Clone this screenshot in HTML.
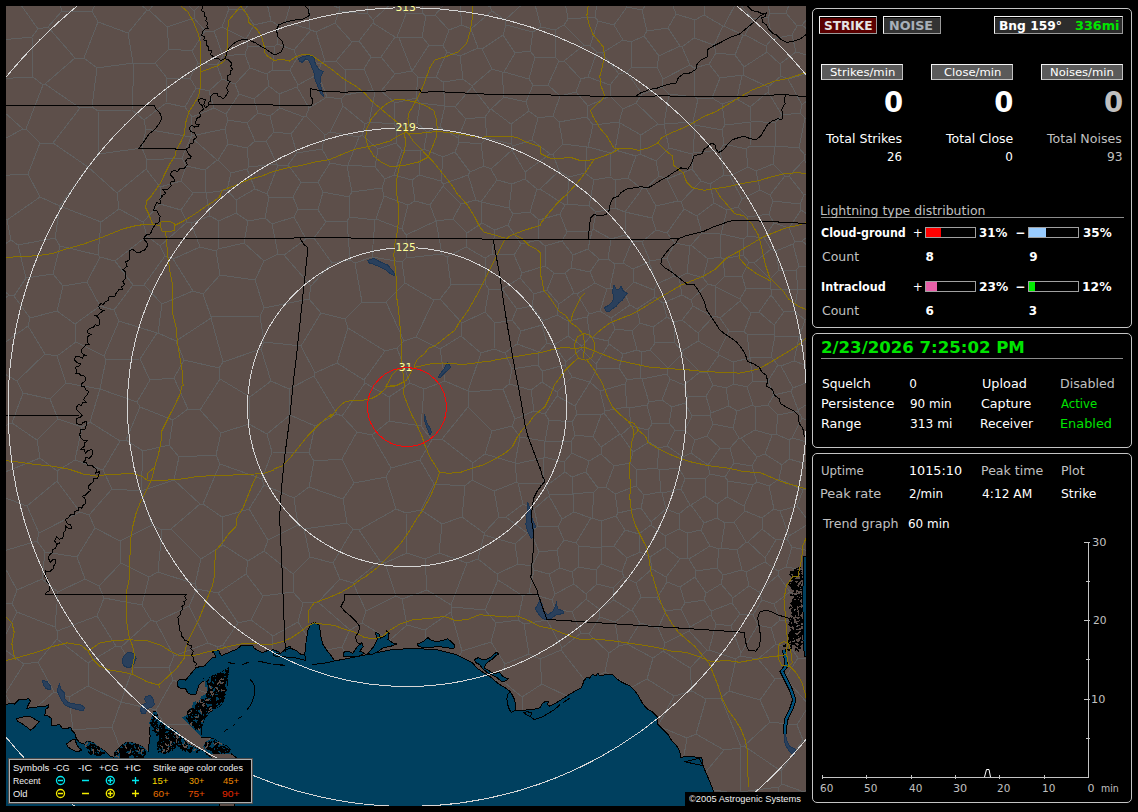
<!DOCTYPE html>
<html><head><meta charset="utf-8"><title>Lightning</title>
<style>
html,body{margin:0;padding:0;background:#000;}
body{width:1138px;height:812px;position:relative;overflow:hidden;font-family:"DejaVu Sans","Liberation Sans",sans-serif;font-size:12px;color:#fff;}
.abs{position:absolute;}
#map{position:absolute;left:6px;top:6px;width:800px;height:800px;background:#5d4f4a;overflow:hidden;}
#map svg{position:absolute;left:0;top:0;}
.panel{position:absolute;left:812px;width:318px;border:1px solid #c4c4c4;border-radius:5px;background:#000;}
.t{position:absolute;white-space:nowrap;display:block;transform-origin:0 0;}
.g{color:#c0c0c0;}
.gr{color:#00e400;}
.b{font-weight:bold;}
.c1{color:#e4e4e4;}
.lg{font-family:"Liberation Sans","DejaVu Sans",sans-serif;color:#f0f0f0;}
.c2{color:#a8b0b8;}
.btn{position:absolute;box-sizing:border-box;border:1px solid #c0c0c0;border-top-color:#f4f4f4;border-left-color:#f4f4f4;background:#5a5a5a;}
.btn.k{border-right-color:#9a9a9a;border-bottom-color:#9a9a9a;box-shadow:inset 0 1px 0 #000;}
.bar{position:absolute;box-sizing:border-box;border:1px solid #a0a0a0;width:51px;height:11px;background:#000;}
.bar i{position:absolute;left:0;top:0;height:9px;display:block;}
</style></head><body>
<div id="map">
<svg width="800" height="800" viewBox="6 6 800 800" shape-rendering="crispEdges" fill="none" stroke-width="1">
<path d="M57 837L76 805M76 805L67 791M35 832L26 800M26 800L37 788M37 788L67 791M320 786L310 830M320 786L331 781M331 781L350 791M350 791L353 820M320 786L298 779M294 831L276 791M276 791L298 779M156 622L174 656M156 622L189 606M174 656L208 643M189 606L208 643M7 220L-14 207M7 220L11 240M-20 261L11 240M100 809L108 836M100 809L120 792M140 799L120 792M140 799L146 838M76 805L100 809M67 791L76 763M120 792L116 763M76 763L116 763M156 750L122 753M156 750L166 765M160 791L166 765M160 791L140 799M116 763L122 753M12 604L17 612M12 604L-24 603M17 612L-0 646M12 604L17 590M17 590L42 579M58 592L42 579M58 592L55 627M17 612L55 627M17 590L-3 553M276 791L263 788M263 788L252 772M298 779L294 744M294 744L291 742M291 742L254 753M252 772L254 753M206 807L192 816M206 807L240 824M160 791L192 816M166 765L201 765M201 765L211 783M211 783L206 807M263 788L240 824M211 783L252 772M485 454L492 431M485 454L473 463M492 431L468 407M473 463L442 439M442 439L468 407M358 744L377 723M358 744L335 744M335 744L330 739M330 739L329 702M377 723L355 691M329 702L355 691M331 781L335 744M379 776L358 744M379 776L379 777M379 777L350 791M294 744L330 739M311 694L285 706M311 694L329 702M285 706L291 742M388 672L360 679M388 672L403 705M360 679L355 691M403 705L386 724M386 724L377 723M379 777L396 801M396 801L383 820M337 363L348 328M337 363L364 380M348 328L385 351M364 380L385 351M315 373L301 346M315 373L337 363M345 319L348 328M345 319L321 313M321 313L301 346M156 622L151 620M189 606L197 589M158 572L195 584M158 572L149 577M149 577L142 605M151 620L142 605M197 589L195 584M158 572L162 530M201 559L195 584M201 559L171 529M171 529L162 530M309 299L321 313M309 299L264 308M301 346L264 342M264 308L260 316M260 316L264 342M223 362L211 318M223 362L261 349M260 316L211 317M261 349L264 342M211 317L211 318M184 360L219 368M184 360L176 341M219 368L223 362M211 318L176 341M55 238L60 246M55 238L18 245M18 245L26 278M60 246L53 274M26 278L53 274M1 836L-12 801M26 800L-10 799M37 788L29 762M29 762L-12 757M-25 690L5 694M-11 744L18 715M18 715L5 694M-0 646L24 664M5 694L24 664M55 627L57 631M24 664L38 662M38 662L57 639M57 631L57 639M380 561L359 530M380 561L385 563M385 563L407 553M396 509L359 530M396 509L406 513M406 513L407 553M379 776L405 753M386 724L405 747M405 753L405 747M396 801L404 802M405 753L436 780M404 802L436 780M404 802L426 834M471 717L447 693M471 717L450 738M450 738L432 730M432 730L423 705M447 693L432 694M423 705L432 694M405 747L432 730M454 757L437 780M454 757L450 738M436 780L437 780M403 705L423 705M476 716L489 684M476 716L471 717M447 693L462 669M489 684L462 669M201 765L211 734M254 753L246 743M246 743L211 734M285 706L282 705M282 705L256 713M246 743L256 713M165 725L206 724M165 725L156 750M206 724L211 734M744 746L770 722M744 746L781 771M781 771L803 740M770 722L797 725M797 725L803 740M741 747L744 746M741 747L721 698M760 700L729 691M760 700L770 722M721 698L729 691M809 705L797 725M809 705L785 678M760 700L775 679M775 679L785 678M809 705L818 701M831 754L803 740M834 768L804 792M804 792L815 819M781 771L782 784M782 784L804 792M729 691L736 659M775 679L758 659M758 659L740 656M736 659L740 656M741 747L740 748M740 748L740 792M782 784L779 787M740 792L779 787M779 787L772 832M740 748L724 750M699 780L724 750M699 780L702 788M740 792L739 794M702 788L739 794M721 698L706 699M690 668L692 691M690 668L707 650M707 650L709 650M736 659L709 650M706 699L692 691M724 750L696 734M706 699L696 734M682 767L687 738M682 767L699 780M696 734L687 738M776 644L758 659M776 644L771 628M740 656L741 653M741 653L758 625M771 628L758 625M92 11L98 22M92 11L105 -14M98 22L128 33M114 -19L147 10M128 33L147 10M149 10L157 1M149 10L147 10M159 -31L157 1M-15 95L23 129M-11 147L23 129M-10 21L6 -3M-7 79L33 77M1 40L32 37M32 37L33 77M362 302L345 319M362 302L386 302M397 348L385 351M397 348L404 341M386 302L404 341M314 376L289 389M314 376L337 414M289 389L290 415M290 415L315 426M337 414L315 426M315 373L314 376M271 381L289 389M271 381L261 349M364 380L365 383M342 416L365 383M342 416L337 414M424 389L421 426M424 389L410 383M410 383L389 397M389 397L389 421M421 426L389 421M432 440L442 439M432 440L421 426M445 381L468 391M445 381L424 389M468 407L469 392M469 392L468 391M397 348L410 383M365 383L389 397M42 579L45 552M-3 553L37 541M45 552L37 541M80 512L39 533M80 512L57 481M39 533L27 506M57 481L27 506M-12 520L3 497M39 533L37 541M27 506L3 497M3 497L-3 478M264 308L255 280M255 280L220 275M211 317L203 294M220 275L203 294M309 453L272 452M309 453L315 426M290 415L267 434M267 434L272 452M157 333L119 321M157 333L140 359M119 321L104 356M140 359L106 360M104 356L106 360M9 295L14 296M9 295L-22 320M14 296L30 318M28 326L30 318M28 326L-7 351M-19 271L9 295M11 240L18 245M26 278L14 296M3 373L-27 397M3 373L-7 351M63 286L57 311M63 286L87 282M100 306L75 324M100 306L87 282M75 324L57 311M53 274L63 286M30 318L57 311M60 246L98 255M100 257L98 255M100 257L87 282M114 310L119 321M114 310L100 306M76 342L104 356M76 342L75 324M114 310L133 285M100 257L115 261M133 285L115 261M25 717L54 692M25 717L44 742M44 742L65 742M69 697L54 692M69 697L73 730M73 730L65 742M18 715L25 717M38 662L54 692M29 762L44 742M76 763L65 742M112 727L122 753M112 727L73 730M470 172L468 175M470 172L455 152M468 175L443 184M443 157L455 152M443 157L441 181M441 181L443 184M468 175L476 200M443 184L443 186M443 186L461 204M476 200L461 204M542 382L531 390M542 382L542 371M542 371L538 365M531 390L509 384M509 384L512 369M538 365L512 369M469 392L503 389M468 391L481 353M503 389L509 384M494 349L481 353M494 349L505 353M505 353L512 369M121 647L116 646M121 647L133 667M116 646L88 663M133 667L121 702M121 702L121 702M121 702L88 686M88 686L88 663M104 598L142 605M104 598L97 616M151 620L121 647M97 616L116 646M174 656L169 668M169 668L133 667M97 616L57 631M57 639L88 663M156 710L173 680M156 710L121 702M169 668L173 680M165 725L156 710M112 727L121 702M69 697L88 686M816 658L798 658M792 649L798 658M792 649L798 625M798 625L813 624M785 678L798 658M776 644L792 649M522 697L500 679M522 697L523 710M476 716L498 730M500 679L489 684M498 730L523 710M254 669L223 645M254 669L236 696M236 696L212 699M218 647L223 645M218 647L209 694M209 694L212 699M282 705L264 668M264 668L254 669M256 713L236 696M206 724L212 699M208 643L218 647M218 593L197 589M218 593L238 623M238 623L223 645M173 680L209 694M309 487L343 499M309 487L294 498M343 499L347 523M347 523L304 529M304 529L298 525M298 525L294 498M223 545L248 561M223 545L201 559M218 593L246 574M246 574L248 561M380 561L353 583M396 596L385 563M396 596L366 611M353 583L366 611M667 813L694 804M694 804L713 833M647 791L655 808M647 791L652 773M655 808L667 813M652 773L682 767M702 788L694 804M655 808L632 834M739 794L739 811M674 696L658 726M674 696L647 679M647 679L632 687M632 687L630 716M630 716L651 729M658 726L651 729M692 691L674 696M687 738L658 726M690 668L663 651M653 658L647 679M653 658L663 651M645 760L651 729M645 760L614 757M615 722L630 716M615 722L607 737M614 757L607 737M652 773L645 760M779 479L769 486M779 479L803 490M780 511L797 506M780 511L774 509M803 490L797 506M774 509L769 486M774 509L762 518M762 518L745 511M769 486L757 482M744 506L745 511M744 506L753 485M753 485L757 482M771 628L780 620M798 625L793 621M793 621L780 620M780 511L789 536M797 506L810 523M789 536L810 523M803 490L806 489M806 489L830 504M814 524L810 523M762 518L762 529M789 536L787 539M787 539L776 540M762 529L776 540M484 166L470 172M484 166L481 144M455 152L459 142M481 144L459 142M149 10L167 27M180 -4L157 1M180 -4L194 11M167 27L194 18M194 11L194 18M16 -2L38 29M62 11L48 27M62 11L51 -24M38 29L48 27M32 37L38 29M92 11L62 11M23 129L26 129M33 77L43 85M43 85L26 129M443 186L430 205M461 204L453 219M453 219L436 221M436 221L430 205M442 254L436 221M442 254L447 257M453 219L467 233M467 233L466 247M447 257L466 247M436 221L436 221M442 254L406 258M436 221L406 235M406 235L406 258M362 302L355 263M355 263L372 257M386 302L405 283M405 283L402 262M372 257L402 262M405 283L434 300M404 341L416 337M434 300L416 337M445 381L440 349M481 353L461 336M461 336L440 349M440 349L416 337M120 541L95 528M120 541L121 563M95 528L77 557M121 563L99 586M77 557L85 579M85 579L99 586M112 489L89 515M112 489L141 491M152 525L141 491M152 525L120 541M89 515L95 528M149 577L121 563M152 525L162 530M80 512L89 515M45 552L77 557M104 598L99 586M58 592L85 579M184 360L174 378M157 333L158 333M176 341L158 333M140 359L150 380M174 378L150 380M106 360L100 389M100 389L137 402M150 380L137 402M173 259L193 291M173 259L165 256M165 256L144 285M193 291L162 304M162 304L144 285M220 275L216 251M203 294L193 291M200 247L216 251M200 247L173 259M160 246L147 236M160 246L165 256M147 236L115 261M133 285L144 285M158 333L162 304M354 483L342 459M354 483L386 477M391 468L386 477M391 468L372 435M342 459L357 432M372 435L357 432M309 487L314 461M314 461L342 459M343 499L354 483M396 509L386 477M359 530L353 529M347 523L353 529M420 460L434 484M420 460L391 468M406 513L421 510M434 484L421 510M420 460L432 440M389 421L372 435M342 416L357 432M309 453L314 461M141 491L174 480M141 491L141 491M171 529L200 504M174 480L200 504M126 440L140 407M126 440L120 441M100 389L100 389M100 389L90 422M140 407L137 402M90 422L120 441M112 489L103 470M141 491L143 451M143 451L126 440M103 470L120 441M40 458L57 471M40 458L37 440M37 440L58 419M57 471L75 460M75 460L82 427M58 419L82 427M57 481L57 471M-0 474L40 458M-4 429L12 423M12 423L37 440M103 470L75 460M90 422L82 427M17 381L23 393M17 381L45 354M23 393L50 399M50 399L66 383M66 383L57 356M45 354L57 356M3 373L17 381M12 423L23 393M28 326L45 354M58 419L50 399M100 389L66 383M76 342L57 356M419 175L441 181M419 175L412 180M430 205L415 201M412 180L415 201M402 229L406 235M402 229L408 205M408 205L415 201M476 200L481 202M467 233L482 223M482 223L481 202M485 258L466 247M485 258L492 254M492 254L495 230M482 223L495 230M484 166L491 169M497 180L491 169M497 180L481 202M481 202L481 202M512 184L497 180M512 184L509 208M481 202L509 208M531 390L534 411M503 389L515 419M534 411L515 419M515 463L520 437M515 463L515 464M515 464L543 458M544 457L543 458M544 457L544 441M520 437L544 441M485 454L515 463M492 431L512 426M520 437L512 426M512 426L515 419M538 365L539 352M505 353L517 344M539 352L517 344M538 526L534 509M538 526L531 532M534 509L523 504M531 532L527 533M527 533L506 517M523 504L506 517M515 464L517 482M543 458L544 484M544 484L518 483M517 482L518 483M518 564L515 544M518 564L497 574M515 544L484 535M497 574L478 559M478 559L484 535M534 411L545 414M545 414L549 420M544 441L545 441M545 441L549 420M542 382L557 392M545 414L557 396M557 392L557 396M753 381L750 358M753 381L747 387M750 358L750 358M750 358L733 362M733 362L734 384M747 387L734 384M734 522L745 511M734 522L725 523M744 506L727 497M725 523L717 518M717 518L717 504M727 497L717 504M753 485L728 481M727 497L728 481M437 780L450 798M450 798L447 823M450 798L486 795M486 795L493 809M493 809L487 835M540 659L561 650M540 659L542 684M561 650L586 682M542 684L573 699M586 682L580 694M573 699L580 694M609 653L589 634M609 653L605 672M605 672L586 682M562 648L561 650M562 648L581 633M581 633L589 634M605 672L632 687M615 722L580 694M500 679L505 664M462 669L458 658M458 658L462 651M462 651L491 642M491 642L505 664M522 697L542 684M540 659L529 654M505 664L529 654M432 694L419 665M458 658L428 656M419 665L428 656M388 672L394 665M419 665L394 665M360 679L342 647M342 647L350 630M362 623L350 630M362 623L390 640M394 665L390 640M396 596L402 599M366 611L362 623M390 640L407 625M402 599L407 625M428 656L425 630M407 625L425 630M462 651L451 612M425 630L451 612M485 610L496 623M485 610L452 607M491 642L496 623M452 607L451 612M647 791L602 794M614 757L599 779M599 779L602 794M616 835L598 803M602 794L598 803M481 763L491 781M481 763L498 734M491 781L513 774M513 774L519 752M498 734L519 752M454 757L481 763M486 795L491 781M498 730L498 734M565 717L579 740M565 717L545 725M545 725L538 748M579 740L572 761M538 748L556 768M572 761L556 768M607 737L579 740M573 699L565 717M523 710L545 725M519 752L538 748M599 779L572 761M562 648L547 620M529 654L524 624M547 620L524 624M496 623L518 620M524 624L518 620M498 580L523 596M498 580L485 610M518 620L523 596M557 550L560 568M557 550L539 552M539 552L532 566M560 568L549 574M549 574L534 570M532 566L534 570M558 527L538 526M558 527L564 540M531 532L539 552M564 540L557 550M527 533L515 544M518 564L532 566M497 574L498 580M529 593L523 596M529 593L534 570M238 623L251 620M246 574L263 596M251 620L263 596M310 557L333 563M310 557L293 574M293 574L293 592M333 563L340 579M340 579L318 602M293 592L303 603M318 602L303 603M353 529L333 563M304 529L310 557M298 525L268 540M268 540L264 551M264 551L293 574M264 551L248 561M263 596L293 592M353 583L340 579M350 630L318 602M758 625L753 615M780 620L774 604M774 604L762 600M753 615L762 600M716 624L731 626M716 624L711 615M711 615L711 611M711 611L732 603M731 626L740 614M740 614L732 603M741 653L731 626M709 650L716 624M753 615L740 614M653 658L627 644M609 653L619 646M627 644L619 646M706 593L704 600M706 593L695 577M704 600L685 603M685 603L680 587M695 577L680 587M806 489L811 479M811 479L824 473M787 539L792 547M792 547L818 553M793 621L797 595M774 604L790 592M797 595L790 592M623 40L602 53M623 40L631 42M632 67L631 42M632 67L627 72M627 72L619 74M619 74L602 53M530 51L515 53M530 51L533 32M533 32L506 25M506 25L503 35M515 53L503 35M481 144L487 138M466 119L458 138M466 119L485 117M459 142L458 138M487 138L485 117M194 11L211 -6M167 27L169 49M194 18L205 31M169 49L192 51M205 31L192 51M255 189L247 169M255 189L236 200M247 169L231 173M236 200L227 190M227 190L231 173M309 299L311 286M355 263L350 260M350 260L332 263M311 286L332 263M350 260L347 221M347 221L326 222M332 263L314 238M326 222L314 238M219 221L218 249M219 221L236 213M236 213L248 221M248 221L244 243M218 249L244 243M269 197L265 218M269 197L267 194M267 194L255 189M265 218L248 221M236 200L236 213M255 280L264 261M216 251L218 249M264 261L244 243M160 246L187 222M200 247L191 223M187 222L191 223M219 221L210 216M191 223L210 216M227 190L206 193M210 216L206 193M143 451L169 445M140 407L173 420M169 445L173 420M174 480L179 457M169 445L179 457M174 378L188 409M173 420L188 409M222 517L249 509M222 517L203 504M203 504L220 464M220 464L262 479M249 509L264 485M262 479L264 485M223 545L222 517M268 540L249 509M200 504L203 504M179 457L216 455M216 455L220 464M294 498L264 485M272 452L262 479M525 172L512 150M525 172L550 154M550 154L532 140M532 140L513 146M513 146L512 150M525 179L512 184M525 179L525 172M491 169L512 150M538 118L529 111M538 118L532 140M529 111L511 124M511 144L511 124M511 144L513 146M511 144L487 138M553 116L559 122M553 116L538 118M553 154L563 144M553 154L550 154M559 122L563 144M547 343L539 352M547 343L542 325M517 344L521 331M542 325L521 331M494 349L495 323M495 323L512 320M521 331L512 320M520 278L534 294M520 278L502 289M502 289L517 309M517 309L532 306M534 294L532 306M542 325L543 321M512 320L517 309M532 306L543 321M568 321L587 317M568 321L557 315M557 315L559 304M559 304L574 293M589 314L587 317M589 314L577 294M577 294L574 293M547 343L554 345M554 345L568 336M568 336L568 321M543 321L557 315M534 294L547 290M547 290L559 304M607 289L600 311M607 289L595 283M600 311L589 314M595 283L577 294M545 266L545 246M545 266L554 273M554 273L565 273M573 255L562 241M573 255L571 268M565 273L571 268M545 246L562 241M522 273L545 266M522 273L520 278M547 290L554 273M574 293L565 273M590 272L571 268M590 272L599 259M599 259L588 249M588 249L573 255M595 283L590 272M485 312L489 289M485 312L462 323M462 323L440 299M485 284L451 285M485 284L489 289M451 285L440 299M495 323L485 312M502 289L489 289M461 336L462 323M434 300L440 299M485 258L485 284M447 257L451 285M522 273L514 255M492 254L514 255M402 262L406 258M513 214L508 225M513 214L530 212M508 225L521 244M539 220L530 212M539 220L538 240M538 240L521 244M495 230L508 225M509 208L513 214M537 189L530 212M537 189L525 179M514 255L521 244M545 246L538 240M768 92L782 115M768 92L768 87M802 105L788 79M802 105L800 113M800 113L782 115M788 79L781 76M768 87L781 76M533 32L541 27M528 -1L505 20M505 20L506 25M541 27L534 1M571 -6L565 2M565 2L541 -3M558 527L562 519M534 509L549 496M549 496L562 519M544 484L546 486M546 486L549 494M523 504L518 483M549 496L549 494M549 494L573 494M562 519L574 512M573 494L574 512M544 457L564 462M546 486L565 472M564 462L565 472M484 533L499 517M484 533L462 517M499 517L494 491M462 517L465 486M494 491L472 480M472 480L465 486M506 517L499 517M484 535L484 533M517 482L494 491M434 484L465 486M421 510L442 524M442 524L462 517M473 463L472 480M779 479L782 465M757 482L752 466M757 457L752 466M757 457L765 454M765 454L782 465M811 479L803 463M803 463L789 459M782 465L789 459M750 358L771 357M750 358L747 334M771 357L775 336M747 334L774 334M775 336L774 334M624 292L634 282M624 292L630 305M634 282L654 290M630 305L637 309M637 309L655 297M654 290L655 297M607 289L610 288M600 311L611 318M611 318L630 305M610 288L624 292M804 195L800 204M804 195L789 176M800 204L773 201M785 176L770 195M785 176L789 176M770 195L773 201M821 181L804 160M804 160L789 176M816 190L804 195M801 210L800 204M801 210L823 225M801 210L789 228M789 228L795 242M795 242L802 241M823 225L802 241M771 295L784 312M771 295L759 312M759 312L774 325M784 312L774 325M794 311L784 312M794 311L798 289M771 290L798 289M771 290L771 295M751 313L744 332M751 313L740 301M740 301L720 318M744 332L729 331M729 331L720 318M747 334L744 332M774 334L774 325M759 312L751 313M718 353L729 331M718 353L719 355M733 362L719 355M682 351L674 342M682 351L698 341M698 341L698 333M674 342L674 322M674 322L682 320M682 320L698 333M674 342L655 343M674 322L667 317M667 317L653 327M655 343L653 327M663 303L667 317M663 303L655 297M637 309L640 323M640 323L653 327M568 336L582 346M587 317L590 337M590 337L582 346M789 440L789 459M789 440L776 434M765 454L772 435M772 435L776 434M682 351L682 354M655 343L650 350M682 354L668 368M650 350L668 368M728 481L725 477M752 466L734 463M725 477L734 463M717 518L704 523M704 523L691 505M717 504L705 496M691 505L705 496M451 605L427 590M451 605L467 563M427 590L425 559M467 563L439 553M439 553L425 559M402 599L427 590M452 607L451 605M478 559L467 563M407 553L425 559M442 524L439 553M493 809L527 808M513 774L529 786M529 786L527 808M556 768L553 774M529 786L553 774M574 584L555 594M574 584L586 594M586 594L586 599M586 599L572 612M572 612L555 609M555 609L552 600M552 600L555 594M572 572L560 568M572 572L574 584M549 574L555 594M578 567L572 572M578 567L596 570M597 584L596 570M597 584L586 594M581 633L572 612M547 620L555 609M529 593L552 600M272 660L273 636M272 660L307 665M273 636L298 622M298 622L317 652M307 665L317 652M264 668L272 660M251 620L273 636M311 694L307 665M303 603L298 622M342 647L317 652M762 600L759 592M790 592L778 575M759 592L778 575M681 609L666 611M681 609L690 627M666 611L658 628M689 631L690 627M689 631L665 643M665 643L658 628M685 603L681 609M657 598L666 611M657 598L667 582M680 587L667 582M704 600L711 611M711 615L690 627M641 597L632 610M641 597L657 598M632 610L640 623M640 623L658 628M707 650L689 631M663 651L665 643M640 623L627 644M614 600L599 609M614 600L630 610M630 610L615 622M615 622L600 617M600 617L599 609M613 588L597 584M613 588L614 600M586 599L599 609M632 610L630 610M619 646L615 622M589 634L600 617M652 569L650 557M652 569L636 583M650 557L640 552M640 552L627 558M627 558L622 572M636 583L624 577M624 577L622 572M641 597L636 583M666 577L667 582M666 577L652 569M639 534L640 552M639 534L625 530M625 530L614 546M614 546L627 558M613 588L624 577M596 570L601 564M601 564L622 572M688 558L680 559M688 558L687 533M680 559L665 547M679 529L687 533M679 529L665 536M665 536L665 547M689 559L696 571M689 559L688 558M695 577L696 571M666 577L680 559M710 546L701 530M710 546L689 559M701 530L687 533M650 557L665 547M651 525L639 534M651 525L665 536M797 595L809 571M797 595L816 601M817 567L809 571M797 595L797 595M786 567L809 571M786 567L778 571M778 571L778 575M792 547L786 567M704 523L701 530M691 505L690 505M679 529L679 514M679 514L690 505M601 548L602 547M601 548L579 546M602 547L601 521M576 543L579 546M576 543L591 518M601 521L592 518M591 518L592 518M614 546L602 547M601 564L601 548M578 567L579 546M625 530L616 516M616 516L601 521M564 540L576 543M574 512L591 518M541 27L555 30M555 30L564 25M565 2L568 19M568 19L564 25M598 -3L595 17M568 19L595 17M616 -7L627 7M627 7L614 25M614 25L598 21M595 17L598 21M597 52L588 77M597 52L590 46M584 45L590 46M584 45L564 61M564 61L581 79M588 77L581 79M610 85L619 74M610 85L588 77M602 53L597 52M614 25L623 40M598 21L590 46M564 25L584 45M556 58L559 61M556 58L535 57M559 61L548 85M535 57L529 79M548 85L533 85M529 79L533 85M555 30L556 58M564 61L559 61M530 51L535 57M576 92L560 96M576 92L581 79M560 96L548 85M504 72L515 53M504 72L529 79M526 102L529 111M526 102L533 85M553 116L560 96M500 -13L490 7M476 -0L490 7M505 20L492 11M492 11L490 7M482 49L503 35M482 49L478 48M492 11L471 29M478 48L471 29M460 6L476 -0M460 6L462 25M462 25L471 29M504 72L502 72M482 49L492 69M502 72L492 69M526 102L504 97M502 72L504 97M511 124L491 109M504 97L491 109M485 117L490 110M490 110L491 109M460 6L449 -1M347 221L350 217M326 222L318 210M323 192L318 210M323 192L349 197M349 197L350 217M372 257L375 220M350 217L375 220M402 229L376 219M408 205L384 196M384 196L376 219M376 219L375 220M229 9L224 -2M229 9L244 10M254 -1L244 10M323 192L318 182M318 210L298 209M293 197L298 209M293 197L301 182M301 182L318 182M229 9L222 27M254 25L244 10M254 25L246 39M246 39L222 27M205 31L214 31M222 27L214 31M209 91L196 88M209 91L214 108M196 88L185 107M185 107L192 117M192 117L214 108M147 236L143 222M181 210L187 222M181 210L160 204M160 204L143 222M98 255L101 222M143 222L119 209M101 222L119 209M55 238L60 206M101 222L60 206M99 154L142 148M99 154L88 167M147 160L142 148M147 160L146 169M146 169L117 193M88 167L117 193M160 187L160 204M160 187L146 169M119 209L117 193M144 120L166 103M144 120L132 110M132 110L134 63M166 103L167 78M167 78L155 63M155 63L134 63M185 107L166 103M191 137L146 129M191 137L191 136M146 129L144 120M192 117L191 136M99 154L98 111M98 111L132 110M146 129L142 148M196 88L190 78M190 78L167 78M190 78L198 63M169 49L155 63M192 51L198 63M128 33L133 63M133 63L134 63M80 108L45 84M80 108L92 107M92 107L97 68M45 84L75 58M97 68L84 58M84 58L75 58M133 63L97 68M98 111L92 107M48 27L75 58M43 85L45 84M98 22L84 58M272 224L278 254M272 224L294 217M294 217L306 239M306 239L284 255M278 254L284 255M265 218L272 224M264 261L278 254M269 197L293 197M298 209L294 217M314 238L306 239M311 286L284 255M181 210L193 193M206 193L205 192M193 193L205 192M160 187L181 181M193 193L181 181M220 379L200 410M220 379L250 397M200 410L221 433M221 433L249 424M250 397L249 424M219 368L220 379M188 409L200 410M271 381L250 397M216 455L221 433M267 434L249 424M593 125L587 117M593 125L619 122M610 96L623 109M610 96L588 106M588 106L587 117M623 109L619 122M559 122L587 117M563 144L587 147M587 147L588 147M588 147L593 125M610 85L610 96M576 92L588 106M553 154L559 171M587 147L585 173M585 173L569 177M559 171L569 177M537 189L540 189M559 171L540 189M682 295L679 277M682 295L663 303M679 277L674 276M654 290L657 284M674 276L657 284M679 277L687 273M687 273L690 246M667 258L674 276M667 258L675 243M675 243L690 246M708 259L691 245M708 259L720 257M720 257L720 234M720 234L702 233M702 233L691 245M703 278L687 273M703 278L708 259M690 246L691 245M596 212L589 206M596 212L593 229M589 206L567 204M593 229L592 231M592 231L567 232M567 232L560 214M560 214L565 205M565 205L567 204M585 173L594 180M594 180L589 206M569 177L567 204M588 249L592 231M562 241L567 232M539 220L560 214M540 189L565 205M610 288L615 264M599 259L608 259M615 264L608 259M593 229L611 239M608 259L611 239M627 7L642 10M644 36L631 42M644 36L647 31M647 31L642 10M649 -16L646 5M646 5L642 10M704 15L706 -3M704 15L695 20M695 20L676 14M677 -5L673 6M673 6L676 14M646 5L673 6M668 28L676 14M668 28L647 31M644 36L659 56M668 28L680 46M680 46L659 56M632 67L657 67M659 56L657 67M813 121L805 118M805 118L799 148M818 151L805 155M805 155L799 148M819 90L802 105M800 113L805 118M776 146L775 123M776 146L799 148M775 123L782 115M804 160L805 155M773 164L775 146M773 164L785 176M775 146L776 146M573 494L594 492M573 494L572 477M572 477L586 472M586 472L598 488M594 492L598 488M573 494L573 494M592 518L594 492M565 472L572 477M615 494L618 513M615 494L606 487M618 513L616 516M606 487L598 488M803 463L813 453M792 438L811 443M792 438L802 418M802 418L821 426M811 443L822 431M789 440L792 438M813 453L811 443M798 411L778 415M798 411L802 418M778 415L776 434M817 398L798 410M798 411L798 410M753 381L768 381M771 357L778 365M768 381L778 365M798 410L791 391M768 405L778 415M768 405L774 395M774 395L791 391M816 266L799 267M799 267L796 270M796 270L798 289M798 289L815 291M813 317L805 320M805 320L799 337M815 345L799 337M799 337L799 337M794 311L805 320M798 289L798 289M775 336L799 337M771 290L770 288M770 288L746 289M740 301L740 299M740 299L746 289M743 255L723 259M743 255L749 262M749 262L742 276M742 276L725 276M723 259L725 276M754 263L770 279M754 263L771 249M776 251L771 249M776 251L779 270M779 270L770 279M770 288L770 279M746 289L742 276M749 262L754 263M799 267L793 244M796 270L779 270M793 244L776 251M789 228L774 223M793 244L795 242M771 249L764 238M774 223L764 238M773 201L769 214M774 223L769 214M802 241L822 258M715 316L713 317M715 316L716 287M713 317L693 306M708 284L691 300M708 284L715 286M691 300L693 306M715 286L716 287M718 353L698 341M720 318L715 316M698 333L713 317M740 299L716 287M682 320L693 306M682 295L691 300M703 278L708 284M720 257L723 259M725 276L715 286M623 354L609 344M623 354L637 350M637 350L632 331M632 331L615 329M615 329L608 341M608 341L609 344M640 323L632 331M650 350L642 352M642 352L637 350M611 318L615 329M590 337L608 341M581 349L596 364M581 349L566 362M572 377L590 382M572 377L565 365M565 365L566 362M590 382L590 382M590 382L597 368M596 364L597 368M582 346L581 349M609 344L596 364M554 345L566 362M575 406L557 396M575 406L590 382M557 392L572 377M542 371L565 365M619 368L597 368M619 368L623 354M648 430L649 442M648 430L631 426M649 442L633 452M631 426L621 435M621 435L633 452M564 462L572 453M586 472L589 461M589 461L572 453M606 487L614 466M614 466L601 454M589 461L601 454M614 466L630 463M621 435L620 434M620 434L601 447M630 463L633 452M601 454L601 447M545 441L571 442M571 442L572 453M741 438L739 438M741 438L755 430M739 438L733 428M733 428L737 411M755 430L755 407M737 411L753 405M753 405L755 407M757 457L741 438M734 463L730 448M730 448L739 438M772 435L755 430M707 436L720 448M707 436L713 424M713 424L733 428M720 448L730 448M729 406L737 411M729 406L711 413M710 415L711 413M710 415L713 424M768 405L755 407M747 387L753 405M734 384L726 388M726 388L729 406M768 381L774 395M688 397L706 396M688 397L684 385M684 385L700 372M706 396L713 385M713 385L707 372M707 372L700 372M692 416L685 403M692 416L710 415M711 413L706 396M685 403L688 397M726 388L713 385M719 355L707 372M682 354L700 372M668 368L667 374M684 385L670 379M670 379L667 374M692 416L685 430M707 436L695 440M695 440L685 430M615 494L636 486M630 463L637 470M636 486L637 470M649 442L659 448M659 448L657 468M637 470L657 468M667 446L675 430M667 446L683 457M695 440L691 453M685 430L675 430M691 453L683 457M720 448L708 465M691 453L708 465M725 477L710 474M708 465L710 474M705 496L706 478M710 474L706 478M579 809L564 804M579 809L571 847M564 804L536 818M598 803L579 809M553 774L564 804M527 808L536 818M762 529L748 542M776 540L765 558M765 558L748 542M778 571L765 562M765 558L765 562M734 522L746 542M746 542L748 542M462 25L449 30M449 -1L435 15M449 30L435 15M422 -6L422 13M422 13L426 16M435 15L426 16M466 119L455 107M490 110L472 87M455 107L472 87M492 69L472 86M472 87L472 86M458 138L440 127M455 107L445 106M440 127L445 106M395 -8L394 1M422 13L406 14M394 1L406 14M349 197L352 192M384 196L382 188M352 192L382 188M345 -11L339 8M339 8L312 -3M267 194L278 165M301 182L288 165M278 165L288 165M191 136L225 129M214 108L226 114M225 129L228 120M226 114L228 120M88 167L60 206M88 167L53 143M28 174L40 197M28 174L40 143M40 197L60 206M40 143L53 143M88 167L88 167M60 206L60 206M80 108L53 143M7 220L40 197M-7 176L28 174M26 129L40 143M191 137L182 158M191 137L217 160M217 160L205 170M205 170L186 166M182 158L186 166M191 137L191 137M147 160L182 158M228 144L225 129M228 144L218 160M218 160L217 160M218 160L231 173M205 192L205 170M181 181L186 166M634 282L633 269M615 264L623 263M633 269L623 263M657 284L649 262M633 269L649 262M667 258L650 261M649 262L650 261M788 79L809 73M809 73L821 81M627 72L642 94M657 67L663 79M663 79L662 87M662 87L642 94M623 109L636 103M642 94L636 103M695 20L694 38M680 46L682 47M694 38L682 47M663 79L690 65M682 47L690 65M806 383L793 388M806 383L805 365M793 388L781 366M805 365L794 361M794 361L781 366M815 387L806 383M791 391L793 388M818 360L805 365M778 365L781 366M799 337L794 361M769 214L748 217M764 238L747 236M748 217L747 236M720 234L721 234M743 255L744 239M721 234L744 239M744 239L747 236M601 415L593 437M601 415L577 414M593 437L575 435M575 435L572 422M577 414L572 422M604 413L620 434M604 413L601 415M601 447L593 437M575 406L577 414M600 391L590 382M600 391L605 411M605 411L604 413M571 442L575 435M549 420L572 422M685 403L672 407M670 379L662 400M662 400L672 407M675 430L669 423M672 407L669 423M648 430L652 424M659 448L667 446M652 424L669 423M640 378L642 379M640 378L627 380M642 379L649 402M627 380L625 384M625 384L627 407M629 408L627 407M629 408L647 405M647 405L649 402M642 352L640 378M667 374L642 379M619 368L627 380M662 400L649 402M600 391L625 384M605 411L627 407M631 426L629 408M652 424L647 405M618 513L641 508M636 486L644 495M644 495L641 508M651 525L651 522M651 522L641 508M679 514L666 509M651 522L666 509M659 470L661 492M659 470L679 468M679 468L685 479M662 493L661 492M662 493L681 489M681 489L685 479M657 468L659 470M644 495L661 492M683 457L679 468M706 478L685 479M666 509L662 493M690 505L681 489M759 592L749 586M765 562L746 572M749 586L746 572M732 603L733 598M749 586L733 598M706 593L721 584M733 598L721 584M773 164L756 171M770 195L760 190M756 171L760 190M693 153L720 150M693 153L695 125M722 130L695 125M722 130L724 144M724 144L720 150M775 146L750 146M750 146L746 149M756 171L748 167M746 149L748 167M588 147L611 153M594 180L610 177M611 153L610 177M619 122L620 123M636 103L658 124M658 124L641 135M620 123L641 135M611 153L615 150M620 123L615 150M426 16L422 37M406 14L397 37M397 37L399 38M399 38L422 37M478 48L460 56M472 86L463 79M460 56L463 79M445 106L445 106M445 106L443 82M463 79L443 82M443 157L424 149M440 127L427 132M427 132L424 149M419 175L421 151M421 151L424 149M366 -13L368 14M339 8L339 11M339 11L368 14M311 30L309 29M311 30L316 32M316 32L335 23M309 -0L309 29M339 11L335 23M394 1L373 20M368 14L373 20M280 -7L291 3M280 -7L267 3M291 3L285 22M267 3L271 21M271 21L278 25M278 25L285 22M309 -0L291 3M254 -1L267 3M309 29L285 22M254 25L271 21M311 30L294 50M277 44L294 50M277 44L278 25M247 169L249 167M278 165L277 164M249 167L277 164M228 144L247 148M249 167L247 148M228 120L247 123M247 148L255 141M247 123L255 141M277 164L266 141M255 141L266 141M318 182L330 163M352 192L347 166M330 163L347 166M288 165L297 153M330 163L322 149M297 153L322 149M316 32L325 61M294 50L297 58M297 58L321 64M321 64L325 61M246 39L248 46M277 44L275 46M248 46L275 46M611 239L625 235M623 263L632 241M625 235L632 241M650 261L642 242M632 241L642 242M675 243L667 233M667 233L656 230M642 242L656 230M809 73L807 55M821 46L807 55M781 76L780 64M780 64L796 52M796 52L807 55M695 97L669 94M695 97L698 99M698 99L693 122M693 122L664 124M669 94L664 124M664 124L664 124M662 87L669 94M694 68L690 65M694 68L695 97M709 64L694 68M709 64L720 78M720 78L712 98M712 98L698 99M693 153L692 154M695 125L693 122M692 154L669 148M669 148L664 124M658 124L664 124M768 87L743 75M743 75L744 67M780 64L767 52M744 67L767 52M793 -6L786 13M786 13L797 26M814 11L802 25M797 26L802 25M765 -9L770 14M770 14L786 13M822 42L802 25M792 35L796 52M792 35L797 26M725 125L722 104M725 125L751 122M722 104L737 99M737 99L750 107M750 107L751 121M751 121L751 122M722 130L725 125M712 98L722 104M750 146L751 122M724 144L746 149M742 75L720 78M742 75L737 99M768 92L750 107M743 75L742 75M775 123L751 121M742 570L723 575M742 570L737 550M737 550L721 548M717 568L719 549M717 568L723 575M721 548L719 549M746 572L742 570M721 584L723 575M746 542L737 550M725 523L721 548M710 546L719 549M696 571L717 568M748 217L738 207M721 234L727 210M727 210L738 207M720 150L724 175M748 167L730 176M724 175L730 176M760 190L742 199M730 176L742 199M738 207L742 199M460 56L447 52M443 82L436 77M436 77L447 52M449 30L443 46M422 37L429 45M429 45L443 46M443 46L447 52M412 180L394 175M421 151L402 150M402 150L394 175M382 188L385 179M348 165L347 166M348 165L375 167M375 167L385 179M394 175L385 179M397 37L395 37M373 20L373 23M395 37L373 23M274 132L270 116M274 132L291 134M304 117L291 134M304 117L280 108M280 108L270 116M247 123L258 113M258 113L270 116M266 141L274 132M297 153L291 134M322 149L325 135M325 135L306 116M306 116L304 117M297 58L290 70M275 46L272 70M272 70L290 70M306 116L309 108M280 108L279 94M309 108L297 87M279 94L297 87M321 64L318 74M318 74L298 85M290 70L298 85M318 74L327 97M309 108L327 97M297 87L298 85M226 114L239 94M258 113L254 99M239 94L254 99M279 94L269 86M254 99L269 86M272 70L267 74M269 86L267 74M727 210L714 203M724 175L710 184M714 203L710 184M702 233L697 216M714 203L697 216M667 233L684 209M697 216L684 209M641 135L640 154M669 148L656 161M656 161L640 154M615 150L636 156M640 154L636 156M735 55L743 35M735 55L716 53M714 45L716 53M714 45L723 26M743 35L724 26M723 26L724 26M709 64L716 53M744 67L735 55M694 38L714 45M704 15L723 26M737 1L724 26M772 39L766 46M772 39L768 17M766 46L745 35M745 35L753 19M768 17L753 19M792 35L772 39M767 52L766 46M770 14L768 17M743 35L745 35M737 1L753 19M348 165L359 137M325 135L330 132M330 132L359 137M402 150L396 143M375 167L378 149M396 143L378 149M359 137L362 135M378 149L362 135M327 97L341 99M330 132L343 106M341 99L343 106M362 135L365 124M343 106L365 124M399 38L412 71M395 37L381 57M381 57L395 74M395 74L412 71M436 77L418 77M429 45L412 71M418 77L412 71M412 71L412 71M417 123L396 127M417 123L420 103M395 103L416 98M395 103L394 124M396 127L394 124M420 103L416 98M427 132L417 123M396 143L396 127M445 106L420 103M381 91L395 74M381 91L395 103M418 77L416 98M369 122L375 92M369 122L394 124M375 92L381 91M369 122L365 124M222 79L217 65M222 79L235 84M235 84L250 68M217 65L223 56M223 56L245 54M245 54L250 68M209 91L222 79M198 63L217 65M239 94L235 84M267 74L250 68M214 31L223 56M248 46L245 54M710 184L701 181M684 209L681 202M681 202L701 181M692 154L692 169M692 169L701 181M596 212L615 208M610 177L615 180M615 208L615 180M636 156L628 178M615 180L628 178M373 23L359 41M381 57L371 57M371 57L359 41M335 23L352 42M352 42L359 41M325 61L336 61M352 42L336 61M681 202L678 201M692 169L667 179M678 201L667 179M656 161L659 176M659 176L667 179M373 90L364 69M373 90L345 95M364 69L345 70M345 95L345 70M375 92L373 90M371 57L364 69M341 99L345 95M336 61L345 70M652 218L625 212M652 218L656 206M656 206L646 188M625 212L625 212M625 212L642 189M642 189L646 188M625 235L625 212M656 230L652 218M678 201L656 206M659 176L646 188M615 208L625 212M628 178L642 189" stroke="#606060"/>
<g fill="#2a405c" stroke="#1c3654"><path d="M298.8 58.8L303.5 56.4L309.4 55.3L314.1 57.6L315.2 63.5L318.8 69.4L323.4 71.7L321.1 75.2L319.9 83.4L322.3 90.5L323.4 96.3L321.1 94.0L317.6 85.8L314.8 78.7L314.1 72.9L311.7 67.0L309.4 61.1L305.8 58.8L302.3 62.3L299.3 61.1Z"/><path d="M368.0 260.5L373.9 258.2L379.8 261.7L388.0 265.2L392.7 271.1L396.2 276.2L391.5 274.6L385.6 269.9L378.6 266.4L372.7 264.0L369.2 262.9Z"/><path d="M447.4 363.0L449.5 365.1L450.9 367.3L448.1 370.1L445.3 372.2L442.5 375.0L440.4 377.8L438.3 377.1L440.4 373.6L442.5 370.8L444.6 368.0L446.0 365.1Z"/><path d="M424.2 413.7L425.6 417.2L426.3 421.4L428.4 425.6L430.5 428.4L431.2 432.6L429.8 434.7L428.4 431.2L427.0 427.7L425.3 423.5L424.5 418.6Z"/><path d="M527.6 502.1L529.9 508.0L531.1 515.0L533.4 522.1L535.8 526.8L532.3 529.1L533.9 536.2L531.1 538.5L527.6 531.5L525.9 524.4L526.4 517.4L527.6 510.4Z"/><path d="M613.9 285.2L616.3 289.9L619.8 288.7L620.9 286.3L623.3 291.0L627.3 293.4L624.5 296.9L622.1 300.4L618.6 302.8L616.3 306.3L612.7 308.6L609.2 312.1L605.7 311.0L604.5 307.5L609.2 305.1L612.7 301.6L613.9 296.9L612.3 292.2Z"/><path d="M540.0 600.6L542.3 604.2L543.5 611.2L548.2 614.7L552.9 611.2L555.3 606.5L556.4 603.0L557.6 608.8L563.5 611.2L563.5 613.5L556.4 614.7L551.7 618.2L547.0 620.1L542.3 618.2L540.0 615.9L535.3 608.8Z"/><path d="M123.3 656.9L128.0 652.3L133.9 653.4L136.2 658.1L133.9 664.0L129.2 668.0L124.5 666.3L122.1 662.8Z"/><path d="M42.4 680.4L47.1 681.6L50.6 686.3L50.6 689.8L45.9 688.6L43.5 685.1Z"/><path d="M59.5 684.4L61.1 689.8L64.7 693.3L64.2 698.0L68.2 702.7L74.0 703.9L81.1 705.0L84.6 707.4L83.4 710.9L77.6 709.7L70.5 707.4L64.7 705.0L61.1 699.2L58.1 693.3L57.6 688.6Z"/><path d="M145.6 696.8L150.3 695.2L153.3 699.2L154.3 705.0L151.5 707.4L146.8 708.6L145.6 713.3L142.1 714.0L140.2 709.7L142.1 705.0L146.3 702.7L144.4 699.2Z"/><path d="M785.0 732.3L786.6 740.0L789.7 746.2L795.9 749.3L793.4 755.5L789.0 750.9L785.3 744.7L784.1 736.9Z"/></g>
<g fill="#00405f" stroke="#000"><path d="M3.2 704.8L6.0 704.8L10.2 703.4L14.4 704.1L19.4 699.1L24.3 699.8L28.5 698.4L30.6 701.2L28.5 704.1L27.1 708.3L32.7 707.6L38.3 706.9L45.4 706.2L48.2 704.8L48.9 706.9L46.1 709.0L44.7 715.3L48.2 716.0L51.0 718.1L51.7 725.1L54.5 725.9L59.4 724.4L62.2 728.0L66.5 728.7L70.7 727.3L72.1 730.8L74.9 733.6L76.3 738.5L79.1 742.0L81.9 743.4L84.7 744.1L86.8 741.3L90.4 742.0L94.6 743.4L97.4 746.2L101.6 749.1L105.8 751.9L110.0 756.1L114.3 757.5L115.0 751.9L118.5 749.1L122.7 744.8L126.9 742.0L132.5 742.7L138.2 744.8L143.8 747.6L148.0 751.9L148.7 746.2L150.1 736.4L149.4 728.0L152.2 722.3L155.0 716.7L153.6 711.1L153.2 711.0L156.7 712.4L158.1 718.7L163.7 724.4L169.4 727.2L176.4 731.4L182.0 737.0L184.8 741.2L189.1 744.7L196.1 748.3L203.1 751.1L206.6 754.0L215.0 760.0L222.0 830.0L-10.0 830.0Z"/><path d="M232.0 830.0L240.0 760.0L231.2 754.0L230.5 749.7L227.0 746.2L221.4 744.0L217.2 741.2L213.0 738.4L205.9 737.0L201.7 737.0L201.0 730.0L202.4 724.4L204.5 718.7L208.7 713.1L214.4 708.9L220.0 706.1L223.5 700.5L225.6 693.4L227.0 686.4L227.7 678.0L228.4 668.1L220.0 673.0L214.4 675.1L208.7 678.0L203.8 678.0L204.5 680.8L201.7 682.2L198.9 685.0L197.5 689.2L196.1 694.1L191.9 694.8L187.6 692.7L185.5 688.5L180.6 688.5L177.8 686.4L177.1 682.2L178.5 680.1L182.0 679.4L185.5 680.1L189.1 675.9L193.3 670.9L196.1 667.4L200.3 666.7L204.5 666.0L208.7 661.1L211.5 658.3L215.8 656.9L214.4 653.4L212.2 652.0L214.4 650.1L218.6 650.1L220.0 653.4L221.4 655.5L228.4 652.7L236.9 649.1L241.1 645.6L252.3 645.3L254.4 648.4L257.9 650.5L262.2 652.7L267.8 650.5L273.4 649.8L279.0 652.0L281.1 654.1L284.7 651.2L286.1 647.7L290.0 646.3L290.6 648.3L296.5 650.6L301.2 654.6L304.7 654.6L305.8 644.0L307.7 631.1L310.5 624.1L314.8 622.2L319.5 625.3L320.6 635.8L322.7 644.0L326.5 649.9L332.1 656.9L334.5 660.9L343.4 659.3L366.9 654.6L390.3 649.9L413.8 648.3L437.2 649.9L456.0 654.6L472.4 662.8L477.0 668.1L484.1 673.0L491.1 677.3L498.1 683.6L505.1 687.8L510.1 691.3L512.2 694.8L514.3 699.1L515.7 704.7L515.0 710.3L517.8 711.0L523.4 710.3L529.1 709.6L536.1 708.9L540.3 707.5L541.7 704.7L543.1 702.6L546.6 701.2L548.7 701.9L547.3 704.7L549.4 706.1L554.4 704.0L560.0 700.5L565.6 696.9L571.2 693.4L576.9 689.9L581.1 687.8L582.5 685.0L583.9 680.8L586.7 677.3L589.5 678.0L592.3 674.4L595.8 675.9L597.9 673.0L599.3 675.9L603.6 675.1L609.2 674.4L613.4 675.1L617.6 679.4L621.8 682.2L626.1 684.3L630.0 685.7L633.9 689.8L638.5 695.7L642.1 702.7L646.8 708.6L652.6 712.1L657.3 716.8L657.3 723.8L662.0 728.5L667.9 734.4L671.4 740.2L676.1 744.9L679.6 750.8L680.8 757.8L684.3 756.7L692.5 756.7L701.9 757.8L703.1 765.6L684.6 761.8L699.0 758.2L704.4 769.0L709.8 781.6L713.4 790.6L718.8 812.2L720.0 830.0Z"/><path d="M803.6 556.9L803.6 578.6L802.1 597.2L803.6 622.1L803.0 640.7L804.6 656.2L811.4 659.3L811.4 556.9Z"/><path d="M343.4 656.9L343.4 652.3L348.1 651.1L352.8 653.4L357.5 646.4L361.7 642.9L363.3 646.4L359.8 651.1L364.5 653.4L357.5 656.9Z"/><path d="M368.0 653.4L373.9 646.4L377.4 639.4L375.1 632.3L378.6 633.5L380.9 638.2L385.6 635.8L386.8 631.1L389.1 633.5L388.0 639.4L392.7 642.9L397.4 644.0L390.3 646.4L383.3 647.6L378.6 651.1L371.5 654.6Z"/><path d="M417.3 644.0L423.2 641.7L427.9 637.5L431.4 640.5L437.2 641.7L441.9 640.5L447.8 638.9L451.3 641.7L454.8 645.2L453.7 648.7L446.6 647.6L437.2 646.4L430.2 647.6L423.2 647.6L418.5 646.4Z"/><path d="M474.2 659.7L478.4 657.6L482.7 659.7L486.9 659.0L491.1 656.9L493.9 654.1L496.7 652.0L498.8 654.1L495.3 656.2L492.5 659.0L488.3 661.8L485.5 664.6L484.1 668.1L488.3 670.2L493.9 673.7L499.5 672.3L503.0 676.6L508.0 678.7L506.6 680.8L501.6 681.5L497.4 678.0L492.5 675.1L486.9 672.3L482.7 668.8L479.8 664.6L475.6 662.5Z"/><path d="M273.0 653.9L280.0 653.9L284.7 649.9L290.6 648.3L296.5 650.6L301.2 654.6L304.7 654.6L305.8 660.5L296.5 658.1L284.7 656.9L273.0 655.8Z"/></g>
<path d="M783.5 650.0L785.0 653.1L786.6 665.5L781.9 671.7L786.6 681.0L791.2 690.4L794.3 699.7L791.2 709.0L786.6 718.3L785.0 727.6L785.0 733.8" stroke="#000" stroke-width="4.2"/>
<path d="M783.5 650.0L785.0 653.1L786.6 665.5L781.9 671.7L786.6 681.0L791.2 690.4L794.3 699.7L791.2 709.0L786.6 718.3L785.0 727.6L785.0 733.8" stroke="#00507a" stroke-width="2.2"/>
<g fill="#5d4f4a" stroke="#000"><path d="M16.5 718.8L21.5 717.4L27.1 716.0L32.0 717.4L36.2 720.2L39.0 721.6L36.2 725.1L32.7 728.7L30.6 730.1L27.1 727.3L22.2 723.7L18.0 721.6Z"/><path d="M66.5 744.1L72.1 739.9L74.9 739.2L76.3 743.4L79.1 748.3L81.9 749.8L77.7 751.9L72.1 749.8L67.9 746.9Z"/></g>
<path d="M203.1 677.3L208.7 678.0L214.4 675.1L220.0 673.0L228.4 668.1L227.7 678.0L227.0 686.4L225.6 693.4L223.5 700.5L220.0 706.1L214.4 708.9L208.7 713.1L204.5 718.7L202.4 724.4L201.0 730.0L201.7 737.0L196.1 731.4L190.5 725.8L182.0 717.3L186.2 715.9L187.6 710.3L191.9 707.5L193.3 701.9L198.9 700.5L201.7 696.2L206.6 693.4L207.3 687.8L204.5 686.4L204.5 680.8Z" fill="#00405f" stroke="none"/>
<path d="M149.0 723.0L151.1 718.7L153.2 711.7L156.7 712.4L158.1 718.7L163.7 724.4L169.4 727.2L176.4 731.4L182.0 737.0L184.8 741.2L189.1 744.7L196.1 748.3L203.1 751.1L206.6 754.0L186.2 754.0L176.4 746.9L172.2 754.0L158.1 754.0L156.7 744.0L159.5 738.4L152.5 731.4Z" fill="#00405f" stroke="none"/>
<path d="M84.7 744.1L86.8 741.3L90.4 742.0L94.6 743.4L97.4 746.2L101.6 749.1L105.8 751.9L107.2 756.1L103.0 757.5L96.0 756.1L90.4 754.7L86.1 750.5Z" fill="#00405f" stroke="none"/>
<path d="M114.3 757.5L115.0 751.9L118.5 749.1L122.7 744.8L126.9 742.0L132.5 742.7L138.2 744.8L143.8 747.6L148.0 751.9L148.0 758.2L118.5 758.2Z" fill="#00405f" stroke="none"/>
<path d="M213.0 738.4L217.2 741.2L221.4 744.0L227.0 746.2L230.5 749.7L231.2 754.0L208.7 754.0L203.1 746.9L205.9 741.2Z" fill="#00405f" stroke="none"/>
<path d="M216.0 698.0L214.3 696.6L212.5 695.3L210.8 696.7L208.9 695.6M226.0 691.2L223.8 691.0L222.4 692.8L220.3 692.4L218.1 692.7L216.1 693.7L214.2 692.6M200.7 699.9L202.3 701.4L203.1 703.5L205.3 703.8L206.0 701.7L206.1 699.5L207.6 698.0L209.5 696.8L209.8 694.6L211.7 693.6M224.4 684.5L224.0 686.6L223.2 688.7L221.0 688.5L219.0 687.6L217.8 685.8L218.3 683.6L218.8 681.5L218.0 679.4L217.7 677.2M221.7 693.1L220.1 691.6L220.7 689.5L222.2 687.8M193.7 726.5L195.9 726.9L198.1 727.3L200.2 727.8M192.1 723.5L190.8 721.7L188.8 722.6M215.4 682.5L214.2 684.3L212.1 685.2L209.9 685.2L207.9 684.4M204.1 705.7L201.9 705.7L199.7 705.8L198.0 704.5L198.9 702.6L201.1 702.8M193.7 715.5L193.7 713.3L193.6 711.1L192.5 709.2M208.9 685.4L208.4 687.6L210.1 688.9L209.1 690.8L209.5 693.0L207.4 693.8M221.1 674.7L222.0 676.6L224.0 677.7L226.1 677.3M198.4 714.5L196.8 713.0L194.8 713.8L192.6 713.5L191.7 711.5L192.8 709.6M209.9 707.8L212.1 707.6L214.2 708.1L215.8 706.5L217.7 705.4M188.5 720.4L188.9 718.2L188.5 716.1L188.4 713.9L189.6 712.0L191.7 711.3M212.0 701.5L209.8 701.4L207.9 702.6L205.7 702.3L204.3 700.6L202.4 699.6L200.9 701.3L202.2 703.1L203.5 704.9L204.5 706.8L206.7 706.9M204.2 703.3L202.4 704.5L200.2 704.8L198.0 705.0M193.9 709.8L192.2 708.4L190.4 709.7L188.4 710.5L187.4 712.5M210.0 689.8L211.6 691.4L211.7 693.6L213.9 693.9L214.4 696.0M189.6 719.3L191.7 719.2L193.9 718.7L195.7 717.4M194.4 727.1L196.6 727.1L198.6 726.1L199.0 723.9L200.1 722.0L200.4 719.9L202.2 718.5L204.0 717.3L205.5 715.6L204.2 713.9M218.7 692.6L220.8 693.3L222.9 693.8L224.8 694.9M206.8 693.2L206.6 695.4L207.4 697.4L206.5 699.5L205.1 701.1L205.0 703.3M197.6 715.7L195.4 715.4L193.3 716.0L191.2 715.3L189.8 717.0L189.6 719.2L188.7 721.2L189.8 723.1L191.8 724.1L193.9 723.6L195.9 722.6M185.8 717.6L187.4 719.2L189.5 719.5L191.7 719.4L192.6 721.4M211.2 689.6L212.7 691.2L211.9 693.3L212.8 695.3L215.0 695.2L217.1 695.8L218.8 694.5L220.1 692.7L218.8 690.9L216.8 690.0L214.6 689.6M219.5 698.0L219.8 700.2L217.8 701.1L218.4 703.2L219.3 705.2M202.9 717.6L201.0 718.7L199.1 719.8L196.9 719.7L195.8 717.8L193.6 717.8L192.5 719.7M220.2 687.9L221.1 689.9L220.4 691.9L218.2 691.7L216.8 690.0L215.8 688.1L213.8 687.3L213.9 685.1L216.0 684.3L218.0 685.0M221.7 694.6L219.9 695.9L217.9 696.7L215.8 695.9L214.5 697.7L212.4 698.2L212.4 700.4L212.9 702.6L214.0 704.5L216.1 703.8L216.2 701.6M213.1 686.5L212.4 684.5L211.5 682.4L211.3 680.2L211.4 678.1L212.5 676.1M227.5 670.5L226.4 672.4L225.6 674.4L223.4 674.2L221.3 673.9M200.2 704.1L198.0 704.5L196.5 706.1L197.7 708.0L199.9 707.7L201.5 709.2L202.1 711.3M213.4 682.0L213.6 679.8L214.2 677.7L215.0 675.7L217.2 675.6L219.0 674.4L221.1 673.9L222.3 675.8L224.4 676.6M202.5 703.1L203.7 704.9L205.3 706.4L207.1 707.7L209.2 708.5L210.7 710.1M215.2 687.7L215.1 685.5L215.4 683.3L216.2 681.3L217.5 679.5L217.8 677.3L219.6 676.0L221.8 675.5L224.0 675.3L226.1 675.0L227.7 673.5M200.9 718.7L201.8 716.7L203.9 717.1L206.0 716.5L207.4 714.7M201.8 708.1L203.9 707.5L204.3 705.4L202.7 703.9L200.5 704.2L198.3 704.2M217.3 701.4L215.1 701.2L213.9 703.0L212.8 704.9L212.0 707.0L210.0 708.0L208.9 709.9L206.9 710.8M215.8 678.3L217.9 679.1L219.0 681.0L221.1 680.3L220.9 678.1L221.1 675.9L221.6 673.7M218.0 674.9L220.2 674.8L221.5 676.5L223.6 677.3L225.3 678.7L227.0 677.3M207.1 705.9L205.2 704.8L205.2 702.6L207.1 701.5L208.8 700.2L210.9 699.5L212.7 700.8L213.5 702.8L214.9 704.5L216.1 706.4M224.1 688.0L221.9 688.5L220.5 686.7L221.9 685.0L223.6 683.6L224.5 681.6L222.8 680.1M213.5 709.1L211.7 707.7L209.6 707.2L207.5 708.0L206.8 710.0L204.8 710.9L203.3 709.3L202.6 707.2L204.3 705.7M197.3 718.4L199.5 718.4L201.1 720.0L200.8 722.2L199.6 724.0L197.6 724.9L195.5 725.6L194.9 727.7M221.5 682.9L220.7 684.9L222.4 686.3L222.3 688.5L224.0 689.8L226.0 690.7M201.7 708.7L199.5 708.9L197.6 709.9L197.1 712.1L194.9 712.2L192.7 712.0L192.4 709.8L190.7 708.5M190.9 709.8L192.9 709.0L194.8 710.2L196.4 708.7L198.6 708.6L200.8 709.2L203.0 708.9L203.5 706.8L203.0 704.6L200.9 703.8L200.9 701.6M202.3 715.5L200.1 715.4L199.5 717.5L199.5 719.7L197.9 721.2L198.0 723.4L199.0 725.4M198.9 703.2L200.8 704.4L200.3 706.6L200.2 708.8L198.1 709.2L196.9 707.3L198.2 705.5M205.1 713.0L203.0 713.7L202.1 715.6L201.6 717.8L203.1 719.4M198.8 723.5L200.7 724.7L200.4 726.9L198.5 727.9L196.6 726.7L195.4 724.9L193.2 724.8L191.0 725.2M223.2 691.9L223.9 694.0L222.1 695.3L222.2 697.5M207.1 703.7L208.1 701.7L209.2 699.8L211.3 699.2L213.5 699.7L214.4 701.7M218.0 676.9L216.0 678.0L213.9 678.5L212.4 676.9M206.6 684.5L208.6 683.5L210.7 683.0L211.6 680.9L213.1 679.4L212.5 677.3M208.1 699.7L207.1 701.7L208.0 703.7L210.1 703.1L212.3 703.6L214.1 704.9L215.7 703.4L215.7 701.2L214.6 699.3L215.3 697.2L217.1 696.0M209.6 683.7L207.5 683.4L207.2 681.2L208.7 679.6M200.6 718.8L199.5 720.8L200.1 722.9L201.2 724.8L200.6 726.9M205.3 715.3L205.2 717.5L203.8 719.2M190.4 718.8L192.4 719.7L193.2 721.8L195.3 722.6L196.8 724.1L198.6 725.5L199.5 727.5M217.8 677.4L216.4 679.1L217.7 680.8L219.8 681.6L221.9 681.0L224.1 681.4L226.3 681.9M194.7 726.5L196.5 727.9L195.5 729.8M214.4 706.8L212.7 705.4L212.4 703.3L211.6 701.2L212.1 699.0L211.1 697.1L212.3 695.2L210.8 693.6M224.5 675.6L226.7 675.9L227.9 674.1L226.5 672.3L225.9 670.2M208.8 697.5L207.9 695.4L206.0 694.4M198.9 707.8L196.8 708.5L195.5 706.8L196.4 704.8L197.9 703.2L196.9 701.2M216.1 684.9L217.3 683.1L219.3 683.9L221.5 683.7L223.7 683.2L223.9 681.0L224.9 679.1M190.8 712.7L189.3 714.3L187.1 714.2M210.8 707.2L209.3 708.8L207.4 707.6L205.4 706.7L203.3 706.1L203.5 703.9L205.2 702.6M222.4 689.6L220.2 689.3L218.2 690.0L216.9 691.8L214.8 691.5L213.1 692.9L211.1 692.0L210.1 690.1L208.1 689.2M209.9 712.1L210.0 709.9L209.7 707.8L211.7 706.7M207.9 711.3L206.6 713.1L204.5 712.5L202.4 711.9L201.1 710.1L200.7 707.9L202.5 706.6L203.3 704.6L203.6 702.4M224.7 685.4L223.1 683.9L221.0 684.8L219.8 686.6L220.5 688.7L222.7 688.9L224.1 687.2L226.2 687.9M195.9 709.9L197.9 709.1L200.1 709.3L202.3 709.3L204.4 708.5L204.6 706.4L206.8 706.1M221.6 697.8L221.6 700.0L219.9 701.3L220.0 703.5M198.8 716.7L200.7 717.8L202.3 716.2L204.1 717.3M220.0 677.0L220.0 679.2L218.7 681.0L216.6 681.8L214.4 681.5L213.7 679.5L215.1 677.8L217.0 676.8M205.5 698.2L207.2 699.5L206.8 701.7L205.0 702.9L205.4 705.1L205.1 707.2L205.7 709.4L204.8 711.4L206.3 713.1M207.2 692.2L209.4 692.4L211.6 692.4L212.5 690.4L212.9 688.3M216.9 683.0L216.4 685.2L215.5 687.2L217.3 688.5L219.4 688.0L221.5 688.6L223.7 688.1L225.7 689.0L226.0 691.2M191.3 714.7L190.3 712.7L188.2 713.1M195.8 718.0L194.1 719.4L191.9 719.4L190.9 721.4L189.2 722.8M219.6 688.8L221.8 689.1L223.9 689.5L225.1 687.6M221.1 679.3L222.2 677.3L223.8 675.9L225.7 674.8L227.2 676.4L226.4 678.5L226.1 680.7L223.9 680.9L222.5 679.2L220.6 678.0M198.3 712.7L200.0 714.1L200.2 716.3L200.1 718.5L200.7 720.6L200.0 722.7L197.8 723.0M224.5 696.3L222.5 695.4L223.1 693.3L225.2 692.6M219.1 691.6L218.3 693.6L220.0 694.9L219.5 697.0L219.8 699.2L220.5 701.3L222.7 701.6L223.3 699.4L222.7 697.3L220.6 696.9L218.4 697.3M213.9 682.5L215.9 683.5L218.0 683.1L219.4 681.4L218.0 679.6L217.7 677.5L219.2 675.8M197.1 730.3L198.1 728.3L200.2 727.7L201.9 726.3M224.0 687.0L224.4 684.8L225.4 682.8L225.7 680.6L227.1 678.9M211.8 694.7L211.5 692.5L210.6 690.5L209.2 688.8M175.9 739.8L174.1 741.1L172.4 742.4L170.2 742.2L168.1 742.9L166.2 744.0L165.5 746.1M158.3 730.5L156.1 730.2L154.0 730.9M170.8 729.6L171.7 731.6L172.8 733.5L173.7 735.6L175.3 737.0L177.1 735.7L179.3 735.6M151.0 719.4L153.2 719.7L153.3 721.9L151.6 723.3L149.6 722.4M159.3 745.2L161.4 744.6L162.6 746.4L164.7 746.0L165.6 744.0L165.4 741.8L164.4 739.8L162.2 740.1L160.0 740.1L159.7 737.9L159.1 735.8M185.5 748.0L183.6 746.7L181.5 747.0L179.9 748.6M188.1 749.5L185.9 749.4L183.7 749.2L182.0 750.6M162.9 730.1L160.8 729.2L158.7 729.9L156.5 730.0L154.6 731.1L152.8 730.0M187.0 750.1L188.9 751.3L190.5 752.7M164.9 743.6L163.1 742.3L161.5 740.8L162.6 738.9L162.6 736.7M162.5 742.3L162.8 744.5L161.1 745.9L159.1 744.9L158.3 742.8L160.0 741.4L160.8 739.3M166.6 749.7L164.6 750.7L162.4 751.0L160.3 751.5L158.1 751.9M151.2 724.9L153.0 726.2L154.4 727.9L154.9 730.0L154.6 732.2M170.3 745.2L172.1 746.5L173.8 745.1L176.0 744.7L176.6 742.6L178.0 740.9L178.7 738.9L180.9 738.3M183.3 747.8L184.7 749.6L186.1 751.3M181.7 748.9L182.9 747.1L181.5 745.3L179.3 745.3L177.1 745.4M159.7 732.8L158.6 734.7L156.4 735.1M163.4 740.0L164.1 737.9L163.4 735.8L165.1 734.4L167.2 733.8L168.3 735.7L167.2 737.6L166.6 739.7L165.3 741.5M166.4 752.2L166.1 750.0L164.1 749.0L164.3 746.8L165.6 745.1L164.2 743.4L162.1 743.9L160.0 744.8L158.3 743.4L158.7 741.2M163.4 730.6L163.5 728.4L161.6 727.4L161.6 725.2M171.8 744.7L171.1 746.8L169.2 747.9L169.7 750.1L168.8 752.1M153.7 719.2L155.6 718.1L155.8 715.9L153.8 715.0M157.7 746.0L158.9 747.8L157.8 749.7M166.8 730.4L169.0 730.4L169.8 732.5L169.5 734.6L170.0 736.8L172.2 736.8L173.1 734.8L173.0 732.6L171.9 730.7L169.7 731.0L169.2 733.1M161.8 745.5L160.5 747.2L161.3 749.3L162.0 751.4L163.8 752.6M169.5 737.8L171.7 737.9L173.8 738.6L176.0 738.5L178.0 737.5L178.2 735.3M172.9 736.0L171.3 737.6L172.1 739.6L174.2 740.4L175.4 738.5L176.5 736.6L175.4 734.8L174.4 732.8L172.2 732.5L170.1 732.1L168.0 732.9M168.3 753.2L168.7 751.0L167.3 749.3L166.6 747.2L167.4 745.2L169.6 744.8M172.4 740.1L170.5 738.8L168.4 739.4L167.4 741.4M168.0 732.9L169.9 734.0L172.1 734.6L174.1 735.4L176.2 736.0M187.5 747.8L186.7 745.7L186.1 743.6M159.5 740.0L159.1 742.2L161.1 743.2L160.9 745.4L159.5 747.1L157.7 748.3L158.5 750.3M162.9 724.1L163.5 726.3L161.6 727.5L159.6 728.2L157.7 727.1L157.5 724.9L155.5 724.0L153.9 725.5L151.8 724.9L151.9 722.7L153.2 720.9M168.7 730.3L166.6 730.0L165.1 731.6L163.1 732.6L161.4 734.0L159.2 734.0L157.2 733.0M180.5 746.2L182.6 747.0L184.7 747.6L186.7 748.5M164.9 729.5L162.8 730.1L161.2 731.6L162.2 733.5L163.2 735.5L164.9 736.8L166.9 735.8M159.2 739.1L160.8 737.6L163.0 737.5L163.5 735.4L165.7 735.2L167.7 736.3L167.4 738.4L167.7 740.6L166.6 742.6M165.4 734.4L164.1 732.6L163.1 730.6L164.8 729.2L163.8 727.3L165.0 725.5M162.0 744.9L162.3 742.7L164.5 742.4L166.1 740.8L167.9 739.7L169.5 738.1L171.2 736.8L173.2 737.7L174.8 739.2L176.9 739.9M163.1 753.4L165.3 753.5L166.2 751.5L165.9 749.3L165.3 747.2L167.2 746.0L168.5 744.3L170.5 745.2L172.2 746.6L172.9 748.7L171.8 750.6M170.6 734.7L172.0 736.4L173.3 738.2L174.5 740.0L176.2 741.4L175.3 743.4L174.9 745.6L175.3 747.7M161.8 744.8L163.2 743.1L165.1 742.1L166.6 743.7L168.8 743.9L170.9 744.7L171.2 746.9M196.8 753.2L197.4 751.1L199.3 750.0M179.6 743.4L180.6 741.4L179.5 739.5L181.1 738.0M161.7 732.7L160.0 731.5L160.2 729.3L159.4 727.2L160.2 725.2L161.3 723.3M158.6 742.6L159.4 740.5L160.1 738.4L159.4 736.4L159.2 734.2L161.3 733.4L163.4 732.8L164.3 730.8L162.8 729.3M168.3 752.3L169.9 750.9L168.9 749.0L170.6 747.5M160.6 752.9L162.7 752.5L164.7 753.4M161.8 736.8L163.8 737.7L165.8 738.5L166.7 740.6L165.4 742.4L163.6 743.6L163.4 745.8L165.2 747.0M156.2 717.8L154.0 717.6L152.3 716.2M160.7 747.0L162.9 747.4L164.1 745.6L165.7 744.1L167.1 742.3L169.1 743.1L169.1 745.3L167.0 746.0L166.3 748.1L166.6 750.3L167.3 752.4M164.9 737.0L165.6 734.9L163.8 733.6L163.0 731.5L160.8 731.3M172.4 739.8L172.1 742.0L169.9 742.2L168.4 740.5L166.4 739.6M163.2 737.4L164.8 739.0L165.2 741.1L164.2 743.1L165.1 745.1L167.1 746.0L167.5 748.1L166.2 749.9L164.8 751.7M171.9 742.5L173.7 743.7L174.1 745.9L176.3 746.3M157.3 721.9L156.2 723.8L156.7 725.9L155.4 727.7L156.0 729.8L156.2 732.0L158.2 732.8L160.4 732.6M187.4 749.9L189.6 749.8L191.1 748.1M155.9 728.2L156.1 730.4L158.3 730.6L160.5 730.7L161.5 732.7L160.0 734.3L161.0 736.3L163.1 736.0M162.8 748.6L164.5 747.2L164.8 745.0L164.5 742.8L165.5 740.8L167.6 741.2L168.7 743.1L170.9 743.2M172.4 748.6L172.6 746.4L173.6 744.5L175.8 744.8L177.8 743.8L179.9 743.3L181.9 744.3L184.0 744.9L186.1 745.6L186.1 747.8M168.3 752.1L168.6 749.9L170.6 749.0L172.6 748.1L174.7 748.9M164.5 745.4L165.4 743.4L167.1 742.0L169.3 741.7L171.3 740.8L171.0 738.6L172.7 737.2M188.6 750.0L190.6 749.1L191.2 747.0M160.4 742.4L158.4 743.5L157.0 745.2M177.3 739.7L179.1 741.0L181.0 742.2L182.0 744.2L180.6 745.9L178.5 746.4L177.0 744.7L174.8 744.8L173.9 746.8L175.6 748.2M183.6 742.5L185.6 743.3L187.3 744.7L186.4 746.7M152.9 727.4L153.7 725.3L154.5 723.3L155.5 721.3L157.6 720.7M189.3 752.5L191.0 751.1L191.5 749.0L193.3 747.6M180.5 738.7L180.9 736.5L179.1 735.2M88.1 751.3L89.7 752.8L90.7 754.7M96.6 749.3L94.4 749.4L92.8 751.0L93.6 753.0L95.2 754.5M90.1 746.1L89.0 748.0L86.8 748.6M91.8 753.3L92.6 751.2L94.8 751.6L96.9 752.0L98.7 750.6L99.1 748.5L97.9 746.7M90.7 748.5L89.0 747.2L86.8 747.0L85.2 745.5M95.2 754.4L96.6 752.7L96.4 750.5L97.5 748.6L97.2 746.4M104.9 752.9L102.7 752.8L100.9 754.1L99.5 755.8M90.0 743.9L92.1 744.7L92.6 746.9L94.3 748.3L94.5 750.5M93.8 753.3L95.6 754.5L97.6 755.6M100.1 754.1L100.1 751.9L98.8 750.1L97.9 748.2M98.2 748.9L96.0 749.2L93.8 749.2L93.0 751.3L91.2 752.5L91.5 754.7M101.6 751.8L100.6 753.7L98.6 754.8L96.7 753.7L94.6 753.2L92.8 751.9M94.2 754.2L93.4 752.1L95.1 750.8L95.5 748.6L95.8 746.4L94.4 744.7L92.2 745.2L90.1 744.5M92.4 749.2L92.2 747.0L93.5 745.3M89.2 753.1L90.7 751.5L90.4 749.4L88.9 747.8L90.0 745.9L91.9 744.8L93.7 746.1M138.5 753.9L136.7 755.2L134.5 755.1L132.6 754.2L130.5 753.4M125.7 752.9L124.2 754.6L122.0 754.4L121.3 756.5M131.9 745.0L131.4 747.1L130.0 748.8L127.9 749.1L125.7 748.7L124.4 750.5L124.9 752.7L126.8 753.8L127.8 755.8L128.8 757.8M142.1 753.5L144.0 752.5L146.2 752.6M126.0 755.6L124.0 754.7L122.7 752.9L120.5 753.2L119.3 751.3M123.1 756.4L124.9 757.7L127.1 757.8L127.6 755.6M122.3 745.9L124.4 746.7L126.0 745.2L128.1 744.6L128.0 742.4M136.1 745.8L138.3 745.9L139.1 748.0L141.1 748.7L143.3 748.7L144.8 750.3M135.0 756.1L136.5 754.6L137.2 752.5L138.6 750.7L137.5 748.9L135.4 749.5L133.8 747.9L132.9 745.9L130.8 745.5L128.6 745.5L126.7 746.7M138.7 754.0L139.2 756.2L141.4 756.3L142.7 758.0M141.2 754.9L141.0 757.1L139.0 757.9L136.8 757.6L134.7 757.0L134.1 754.9L135.9 753.6L134.9 751.6L134.0 749.7L131.8 750.2L130.1 751.6M122.4 749.5L120.4 748.5L119.1 750.3M140.7 750.9L142.7 750.2L143.3 748.1M141.1 754.3L138.9 754.4L136.8 755.1L135.4 753.4L134.4 751.4L133.2 749.6L132.5 747.5L130.6 746.4L128.4 746.3L126.4 747.1L124.2 746.9M127.8 753.5L125.7 754.2L123.7 753.2L121.8 752.1L122.4 749.9L123.5 748.1L123.6 745.9M126.9 745.2L127.3 747.4L125.7 749.0L123.7 748.2L121.9 749.4L119.9 748.5M138.4 746.5L136.2 746.9L135.5 744.8L133.3 744.3M125.6 754.1L123.7 755.2L121.5 755.6L121.3 757.8M139.6 748.7L140.7 750.6L142.1 752.3L144.2 752.7L145.6 751.0M144.4 752.7L145.2 754.7L143.3 755.8L142.9 758.0M123.8 747.4L124.4 749.5L123.1 751.3L123.2 753.5L122.3 755.5L123.1 757.5M129.0 747.5L129.2 749.7L130.8 751.2L131.0 753.4L128.9 754.1L126.7 754.0L125.0 752.6L122.8 752.8M125.7 747.5L124.0 746.1L121.8 746.3M137.7 755.9L139.9 756.2L141.6 757.7M135.2 751.7L133.3 752.8L131.8 754.4L129.8 755.4L127.7 755.9L125.6 756.6L123.4 756.4M130.7 745.0L128.6 744.4L127.6 746.4L128.8 748.3L128.1 750.4L126.0 751.0L124.5 752.6M121.0 757.6L120.6 755.4L121.3 753.3L122.1 751.3L120.2 750.0M125.6 750.4L124.1 752.1L124.5 754.2L122.7 755.5L120.9 756.7M121.3 758.2L121.1 756.0L120.7 753.8L120.0 751.7L117.8 751.7L115.9 753.0L114.8 754.9M118.5 752.7L117.5 754.7L115.5 755.5M137.9 748.4L136.8 746.6L136.2 744.4M797.6 583.6L795.5 584.0L795.5 586.2L797.2 587.6L796.8 589.7L798.5 591.1M795.7 592.8L794.8 590.8L793.3 589.1L791.2 588.4M795.0 600.0L793.6 601.7L794.1 603.8L794.1 606.0L796.1 606.9L797.8 608.4L797.9 610.6M800.1 585.8L798.9 587.6L796.9 586.7L794.8 587.6L792.9 586.5M799.5 612.4L800.9 610.6L800.3 608.5L799.9 606.3L797.8 606.1L795.6 606.7L794.9 608.7M794.8 627.7L793.5 625.9L793.4 623.7L792.2 621.9L793.0 619.9L794.8 618.5L796.8 619.3L797.1 621.5L795.4 623.0L793.7 624.4L791.9 625.6M797.7 615.2L799.4 613.9L801.1 612.4L802.6 610.8M794.0 636.3L792.0 637.2L790.0 636.3M789.6 637.1L791.5 636.1L791.9 633.9L790.1 632.7M799.4 570.6L800.7 572.4L800.8 574.6L800.9 576.8M802.3 606.3L800.2 606.0L799.3 604.0L798.9 601.8M801.9 575.1L800.8 577.0L802.4 578.5M787.8 642.5L789.5 641.1L791.1 639.6L790.6 637.4L791.5 635.4L789.9 633.9M792.8 572.9L794.2 574.6L794.1 576.8L792.4 578.2L790.9 579.7M801.5 627.5L799.4 626.8L797.4 627.6L795.2 628.1L794.4 630.2L793.1 631.9L793.9 634.0M801.8 582.9L800.3 584.5L801.1 586.6L801.7 588.7M800.0 575.9L798.0 575.0L796.9 573.1L794.8 573.9L793.6 575.7L791.8 577.1L791.8 579.3L793.9 580.1L794.0 582.3M799.9 577.7L798.1 578.9L796.2 577.7L794.0 577.5L793.0 575.5M795.3 632.5L793.3 631.6L792.0 629.8L790.7 628.0M796.1 578.0L796.0 580.2L794.2 581.4L792.2 582.4L790.0 582.6L789.1 584.6L790.7 586.1L792.5 584.7L791.8 582.7M791.9 648.2L789.8 648.5L787.6 648.8L786.4 647.0M791.8 610.8L793.1 612.6L795.2 612.1L797.4 611.6L799.1 613.0L799.8 615.1M802.1 582.7L800.3 584.0L800.1 586.2L799.4 588.3L798.4 590.2L796.4 591.2L795.7 593.3M793.1 575.4L794.6 573.9L794.7 571.7L794.9 569.5M797.5 615.1L799.6 614.4L801.5 613.3M797.0 598.2L796.6 600.4L795.1 602.0L796.2 604.0L798.3 604.5L800.4 603.8L802.5 604.5M791.6 626.9L790.1 625.3L788.7 623.6M798.8 592.6L800.0 594.4L801.6 595.9M785.1 647.3L785.2 645.1L787.3 644.4L789.3 643.7L791.5 643.2L791.6 641.0L793.3 639.6M798.7 590.3L797.1 588.9L795.2 587.7L795.3 585.5L797.4 584.7M795.1 569.3L797.3 569.9L798.6 571.7L800.3 573.1L801.1 575.1L800.2 577.1L800.7 579.3L799.5 581.1L797.9 582.6L796.8 584.5L796.1 586.6M800.2 607.0L801.0 609.0L802.7 610.5M796.5 629.9L794.6 630.9L792.6 632.0L790.5 632.1L789.5 634.1L788.6 636.1L790.1 637.8L790.3 640.0L792.0 641.3M796.3 606.5L794.5 607.8L792.6 608.8L791.2 610.5M793.2 606.0L791.2 607.1L789.2 608.0M782.8 646.2L785.0 646.3L787.2 646.6L788.6 644.9L790.6 645.9L791.6 647.8L790.5 649.7L788.3 650.1M790.2 616.9L791.3 618.8L791.8 621.0L790.1 622.3M794.1 572.3L796.1 573.3L797.7 571.8L799.3 570.3L801.4 571.1M801.7 628.9L802.1 631.1L800.9 632.9L800.0 634.9L799.3 637.0L797.5 638.3L795.3 637.7L793.4 636.7L792.2 634.8L790.2 633.9M795.1 624.4L793.0 623.7L792.1 621.7L791.0 619.8M800.4 630.1L798.4 630.9L796.2 631.2L794.6 632.7L795.0 634.9L794.7 637.1L792.6 637.6L790.5 638.4L789.9 640.5L788.5 642.2L788.9 644.4M795.5 629.6L796.4 631.6L798.3 632.8L800.1 634.1L802.3 633.8M793.3 636.1L791.9 634.4L789.9 635.2M799.5 570.0L797.3 570.5L795.6 571.9L794.9 574.0L794.9 576.2L794.2 578.3L794.8 580.4L797.0 580.5L797.8 578.5L800.0 578.5M795.8 574.7L794.3 576.4L792.3 577.3L791.1 575.5M790.5 576.5L790.2 574.3L791.4 572.5M794.1 589.0L795.2 587.1L794.4 585.1L795.6 583.2L794.4 581.3L795.0 579.2L795.5 577.1M797.8 604.7L799.8 605.4L799.6 607.6L798.2 609.3L796.5 610.6L794.4 611.4L793.0 613.2M793.0 593.6L793.8 595.7L796.0 595.6L798.0 594.7L800.0 594.0L800.8 591.9M793.7 609.6L793.7 611.8L795.8 612.2L796.2 614.4L797.0 616.4M796.9 604.5L796.4 606.6L798.0 608.1L799.9 609.2L802.0 608.4M790.3 607.0L790.5 604.8L791.8 603.0L793.4 601.5L795.5 600.8L796.8 602.5L797.1 604.7M798.0 580.6L796.9 578.7L795.8 576.8L795.8 574.6L796.2 572.4L797.0 570.4L799.1 569.7L801.1 570.6M802.1 635.4L802.0 633.2L803.2 631.4M799.0 631.9L799.5 634.0L797.8 635.3L796.1 636.8L794.4 635.5L792.2 635.2L790.1 635.8M799.5 626.9L798.0 628.5L796.0 627.5L795.3 625.4L795.6 623.2M797.1 622.4L799.3 622.2L801.1 621.0L803.1 620.0M797.4 648.5L795.4 649.3L794.6 651.3M798.3 620.6L799.4 618.7L801.6 619.0L802.1 621.2L802.2 623.4M792.8 595.1L794.7 596.2L796.5 597.4L798.6 598.1M796.4 643.4L795.8 641.3L795.0 639.3L794.6 637.1L793.9 635.0L791.7 635.3L790.7 637.3L792.2 638.8L794.1 640.1M800.7 620.9L799.9 623.0L800.6 625.1L802.7 625.5M802.1 620.7L801.6 618.6L800.4 616.7L798.6 615.4L797.5 613.5M793.9 595.6L791.7 595.7L790.1 594.2M792.7 589.2L794.8 589.9L796.2 588.2L798.3 588.7L800.5 588.2M793.9 582.0L793.7 584.2L794.3 586.3L795.9 587.8L795.9 590.0L795.3 592.1L793.1 592.6M792.1 615.7L793.8 614.3L795.2 612.6L797.2 613.5M798.1 610.4L796.6 612.0L796.3 614.1L794.4 615.3L793.2 617.2L791.5 618.6L792.1 620.7M798.2 595.9L800.4 595.8L801.2 597.8L800.0 599.7L799.1 601.7L798.8 603.9L800.1 605.7L800.7 607.8M792.8 631.4L794.8 630.6L795.8 628.7L794.8 626.7L792.9 625.6L791.0 624.5L789.9 622.6L791.5 621.1L792.7 619.2M795.3 649.7L797.5 649.6L798.5 651.6M799.6 614.6L798.1 612.9L799.1 610.9L798.5 608.8M794.1 637.0L793.6 634.8L793.5 632.6L793.3 630.5L791.1 629.9M801.4 602.4L799.2 602.5L797.1 602.0L795.4 603.4L795.8 605.5L794.1 606.9L792.7 608.6L793.0 610.7L794.2 612.6L793.0 614.4L790.8 614.8M797.9 579.7L795.7 579.6L794.4 577.8L792.9 576.2L790.8 576.8M794.6 612.9L796.7 613.5L797.9 615.3L798.4 617.5M794.6 572.5L792.5 572.2L790.3 572.0M792.3 622.3L792.7 624.4L794.7 625.3L796.8 624.7L799.0 624.3L799.5 622.2M800.6 648.9L798.7 647.9L798.9 645.7L801.0 644.9L802.0 642.9M791.9 619.5L793.1 617.7L794.6 616.0L794.1 613.9L791.9 613.6M797.8 646.8L795.8 645.8L794.4 644.1L792.2 644.5L790.2 645.5L788.0 645.4L787.2 643.4M793.7 624.3L793.3 622.2L792.8 620.0L793.9 618.1L793.2 616.0L794.1 614.0L795.2 612.1L796.3 610.2L798.5 610.0L800.0 611.6M792.1 601.8L793.8 603.2L795.6 604.4L797.5 603.2L798.4 601.2L796.7 599.9L796.1 597.8M793.8 573.1L794.2 571.0L796.2 570.2L797.5 568.4L799.7 568.0L801.4 566.6M801.6 572.3L799.4 572.3L798.4 570.4L797.7 568.3M791.2 576.8L793.1 577.8L794.9 579.1L796.9 579.9L799.1 579.9L801.3 579.4L803.4 578.8M789.8 585.3L791.9 585.0L794.1 584.9L796.0 583.8L797.6 585.3M791.0 621.3L789.4 619.8L789.2 617.6M792.4 583.4L792.8 585.6L791.6 587.4L792.9 589.2L795.1 588.8L797.3 588.7M792.1 644.4L793.2 642.6L795.4 642.2L797.6 642.4L799.3 643.9L801.0 645.2L803.2 645.5M797.3 592.7L798.2 590.7L800.4 590.4L802.6 590.6M801.0 635.1L801.3 637.3L801.3 639.5L800.1 641.3L800.1 643.5L801.6 645.0L800.5 646.9L799.9 649.0M801.6 612.9L799.5 613.2L798.4 611.2L798.0 609.1L799.6 607.5L801.1 605.9M792.8 609.6L794.0 607.7L794.0 605.5L795.4 603.8M796.1 610.6L796.6 608.5L797.8 606.7L797.5 604.5L795.4 603.6L793.3 604.0L792.8 606.2L790.8 607.2M792.7 603.6L793.4 601.5L792.5 599.5L794.2 598.1L796.3 597.5L798.5 598.0L800.3 599.2M785.0 645.0L787.1 644.2L788.6 642.6L787.8 640.5M214.2 752.9L216.4 752.9L218.6 752.7M222.1 749.5L220.5 750.9L218.3 750.5L216.2 749.9L214.2 750.9L212.6 749.4L213.8 747.5L215.6 746.2M217.6 747.6L219.8 747.5L221.8 746.6L224.0 746.9L226.1 747.6M213.1 751.7L211.7 750.0L210.8 748.0L208.7 747.4L207.5 745.6L205.9 744.0L205.9 741.8M213.4 743.1L215.5 743.8L217.6 744.4L219.3 743.1M213.3 749.3L214.2 751.4L213.1 753.3M227.0 751.8L226.1 749.8L223.9 750.2L222.2 751.6L221.1 753.5M229.5 749.1L229.0 751.2L227.6 752.9M210.1 749.4L207.9 749.0L206.2 747.5L205.7 745.4M215.8 749.9L215.8 747.7L217.3 746.2L216.4 744.2L218.1 742.9M221.1 752.5L223.3 752.6L225.5 752.9M221.3 748.9L219.1 749.2L217.6 750.8L215.9 752.1M216.0 745.0L217.5 746.6L218.4 748.6L220.4 749.5L222.5 749.3L224.3 750.7L223.3 752.7M213.7 740.4L214.8 742.3L216.9 743.2L219.0 743.6M210.2 741.3L208.6 742.9L206.9 744.2L204.7 743.9M204.3 745.6L206.5 745.5L207.7 743.6L209.8 742.9L209.4 740.7M221.3 753.8L222.6 752.0L224.8 752.4L227.0 752.5L229.1 751.9M220.8 747.7L222.4 749.1L224.4 750.0L226.2 748.7L228.2 749.5L228.6 751.7M208.2 744.5L206.3 745.5L204.1 745.3M219.6 754.0L217.5 753.4L215.4 752.8L213.7 751.4L212.0 752.9M210.9 751.1L210.0 749.1L207.9 748.5L207.2 746.4L209.0 745.1L210.5 743.5L211.8 741.7M219.2 748.0L221.0 749.1L223.1 749.9L225.1 750.7" stroke="#000" stroke-width="1.5"/>
<path d="M209.8 691.9L211.2 692.0L211.8 693.4L212.0 694.9L213.4 695.6M208.5 711.6L209.9 711.2L210.9 710.0L212.4 710.3M199.5 731.4L199.9 730.0L198.9 728.8L197.5 729.3M213.4 695.3L213.8 693.9L212.8 692.7L211.9 691.5M200.7 720.7L201.8 721.7L203.0 720.9M219.8 680.3L220.2 681.7L218.9 682.4L218.0 683.5L216.8 684.5M204.9 703.5L203.4 703.7L202.7 705.0L203.8 706.0L205.2 705.4M200.4 698.9L200.4 700.4L200.4 701.9L201.6 702.8L203.1 702.5M196.3 703.4L196.5 701.9L198.0 701.6L199.1 702.6M218.8 691.8L218.4 690.4L217.3 689.3L216.7 688.0L215.4 687.3M198.3 714.8L198.9 716.1L197.8 717.2L196.3 717.0L195.1 717.8M220.8 681.7L220.9 683.2L222.3 683.5L223.4 682.4M221.1 689.4L221.7 690.8L223.2 690.9L224.6 690.5M191.9 725.6L190.9 724.5L190.9 723.0L192.0 722.1M205.6 700.9L206.8 700.0L208.3 700.2L209.6 699.4M188.5 714.4L189.3 713.2L190.7 712.7L191.3 711.3L192.1 710.0M200.5 709.3L200.5 710.8L201.4 712.0L202.0 713.3M211.5 689.0L210.2 688.2L210.3 686.7L209.4 685.4M209.6 710.1L209.4 708.6L210.8 708.0L212.1 707.2M224.3 679.5L222.8 679.4L221.4 679.1L220.4 680.3M172.0 745.5L170.6 745.0L170.7 743.5L171.3 742.1L170.4 740.9M185.4 746.5L186.8 745.9L188.3 745.6M176.1 737.9L177.3 736.9L176.6 735.6L177.6 734.5M165.1 749.9L163.6 750.1L162.9 751.4L162.6 752.8M193.5 750.6L194.6 749.7L196.1 749.7M163.0 748.3L162.7 746.8L161.3 746.5L160.5 745.2M168.7 738.7L167.2 738.9L166.2 737.7L166.3 736.2L164.9 735.5M183.0 745.7L183.8 744.4L184.4 743.1L184.7 741.6M168.8 745.0L167.3 745.3L166.0 744.6L165.5 743.2M166.8 752.1L166.9 750.6L168.2 749.9L167.9 748.4L169.3 747.8M176.6 731.9L175.3 732.6L174.8 734.0L175.9 735.0M178.7 737.6L177.4 738.4L176.7 739.7L176.7 741.2L176.3 742.6M186.7 747.0L185.3 747.4L184.1 746.4L183.1 745.3L182.5 743.9M159.1 729.7L158.1 730.8L156.7 730.4L156.3 728.9M179.8 734.9L178.3 734.9L177.4 733.8L176.2 732.8M97.2 749.0L98.2 750.1L99.7 750.1L100.0 751.6M93.6 753.8L93.2 752.4L93.1 750.9L93.0 749.4M86.4 747.2L85.7 745.9L85.7 744.4L87.0 743.6L87.8 742.3M137.4 751.6L138.9 751.3L139.9 750.1L138.9 748.9L138.5 747.5M128.2 753.4L129.7 753.1L130.2 751.7L131.1 750.5M141.1 753.4L141.9 752.1L141.7 750.6L142.6 749.5L144.1 749.7M118.4 752.8L118.2 751.3L116.9 750.6M115.6 757.3L116.3 756.0L117.8 756.4L119.0 757.2M125.2 744.8L125.2 746.3L125.2 747.8L126.7 748.0M800.7 603.7L801.8 604.8L802.1 606.2L800.7 606.8L799.5 605.8M796.2 590.1L797.3 591.1L798.7 591.7L799.8 592.7L801.3 592.5M793.5 617.0L793.8 618.5L794.8 619.6L796.0 620.4M801.3 569.2L799.8 569.1L798.5 569.8L797.1 569.3M799.7 631.9L798.2 632.2L798.1 633.7L797.5 635.0M791.1 613.8L790.3 615.1L791.2 616.3L792.6 616.0M794.6 622.3L796.1 622.5L797.2 621.5L798.6 620.9M799.6 590.8L799.8 592.3L799.0 593.5L797.5 593.8M788.6 645.0L787.1 645.4L786.1 644.3M792.4 578.0L791.1 577.3L789.9 576.4M799.0 615.9L798.3 614.6L798.2 613.1L798.0 611.7L798.2 610.2M797.8 605.5L797.8 607.0L797.4 608.5L798.2 609.7M799.7 649.5L801.2 649.5L801.8 648.1L802.8 647.0L802.1 645.7M789.4 604.2L788.4 603.2L786.9 603.2M800.4 647.2L801.7 646.4L802.3 645.0L802.9 643.7M789.3 603.7L790.5 604.6L791.1 606.0L791.2 607.5M785.8 645.3L786.8 646.4L787.9 647.4L788.1 648.9M801.3 583.3L799.8 583.7L798.7 584.7L797.8 585.9M792.3 645.9L792.4 647.4L793.2 648.7L794.3 649.7L794.6 651.1M793.3 593.8L794.8 593.5L796.1 592.9L796.6 591.5M799.5 576.9L799.1 578.4L797.6 578.5L796.2 577.9L795.0 578.9M208.2 747.3L207.3 746.1L207.2 744.6L208.0 743.4L207.5 742.0M216.3 743.2L215.6 744.5L214.1 744.1L213.0 743.1M216.9 742.8L218.4 742.7L219.9 743.0L221.1 743.9L221.7 745.3M207.7 746.1L206.4 746.9L205.1 747.6L205.1 749.1" stroke="#5d4f4a" stroke-width="1.2"/>
<path d="M249.5 678.7L253.7 683.6L254.9 690.6L253.7 697.6L250.9 704.7L246.7 710.3M242.5 715.9L238.3 718.7M234.7 724.4L232.6 726.5M228.4 728.6L224.2 731.4M228.4 662.5L235.4 664.2M242.5 664.6L249.5 661.8M257.9 661.1L265.0 662.5L270.6 663.9M276.2 664.6L284.7 665.6M273.0 664.0L284.7 665.2M311.7 664.7L327.0 662.8L334.5 660.9M510.1 691.3L508.0 694.1L506.8 699.1L507.7 704.7L509.4 709.6L511.5 712.4L515.0 710.3M523.4 712.4L526.2 714.5L530.5 716.6L534.0 719.4L537.5 718.7L543.1 716.6L548.7 713.1L554.4 709.6L558.6 706.1L560.0 704.7M562.8 702.6L569.8 698.3M523.4 712.4L527.6 711.7L531.9 713.1L530.5 716.6" stroke="#000"/>
<path d="M180.8 6.0L187.8 11.9L193.7 22.4L198.4 34.2L200.7 43.5L200.7 71.7L200.3 88.1L198.4 96.3L193.7 104.5L189.0 111.6L185.5 123.3L184.3 133.9L180.8 142.1L176.1 150.3L174.9 156.2L170.2 163.2L165.5 172.6L159.7 184.3L151.5 195.6L151.5 196.0L146.8 200.7L145.6 207.7L149.1 214.8L151.5 221.8L153.8 225.3M240.6 6.0L234.8 13.0L228.9 20.1L227.7 29.5L227.7 43.5L226.6 52.9L224.2 61.1L217.2 65.8L207.8 69.4L200.7 71.7M240.6 6.0L247.7 15.4L248.8 22.4L257.1 29.5L261.7 36.5L264.1 45.9L264.1 51.8L267.6 56.4L273.0 59.5L273.0 60.4L282.4 59.5L289.4 61.1L296.5 56.4L303.5 54.1L311.7 55.3L319.9 61.1L331.7 69.4L343.4 78.7L355.1 85.8L364.5 92.8L371.5 101.0L378.6 106.9L385.6 112.8L392.7 118.6L399.7 124.5L404.4 129.2L407.9 132.7L413.8 142.1L423.2 151.5L432.5 160.9L441.9 172.6L451.3 184.3L458.4 195.6L459.5 196.0L467.7 205.4L474.8 217.1L479.5 226.5L484.2 232.4L493.6 234.7L505.3 238.2M273.0 171.5L261.6 176.2L249.3 179.3L235.7 185.4L222.2 190.3L219.7 195.3L220.7 196.0L214.8 200.7L205.4 206.6L193.7 214.8L184.3 220.6L174.9 225.3M273.0 171.4L287.1 167.9L301.2 165.5L315.2 162.0L329.3 159.7L343.4 153.8L355.1 149.1L366.9 146.8L378.6 144.4L390.3 140.9L397.4 136.2L404.4 132.7L413.8 133.9L425.5 132.7L437.2 131.5L451.3 132.7L465.4 135.0L479.5 137.4L493.6 136.2L507.6 136.2L517.0 137.4L526.4 142.1L540.0 146.8L540.0 153.3L549.4 158.0L558.8 158.5L570.5 157.3L581.1 160.9L592.8 159.7L603.4 156.2L612.7 152.6L620.9 148.0L629.2 148.0L638.5 150.3L647.9 148.0L657.3 143.3L662.0 137.4L671.4 132.7L683.1 128.0L692.5 123.3L704.2 116.3L716.0 111.6L727.7 104.5L739.4 97.5L751.2 90.5L762.9 85.8L774.6 81.1L786.4 78.7L798.1 75.2L807.0 71.7M472.4 6.0L472.4 17.7L470.1 31.8L466.6 43.5L458.4 51.8L446.6 56.4L434.9 60.0L430.2 67.0L426.7 76.4L423.2 85.8L419.6 94.0L413.8 104.5L409.1 112.8L407.9 118.6L409.1 125.7L404.4 132.7L405.6 142.1L404.4 151.5L400.9 160.9L398.5 170.2L396.2 182.0L396.2 195.6L397.4 196.0L398.5 207.7L398.5 219.5L397.4 231.2L395.0 242.9L393.8 254.7L395.0 266.4L396.2 278.1L396.2 294.5L398.5 308.6L399.7 322.7L400.9 336.8L401.6 350.9L402.0 364.9L403.2 374.3L404.4 385.6L404.4 386.0L403.2 393.0L406.7 402.4L411.4 414.2L417.3 425.9L422.0 436.4L425.5 447.0L430.2 457.6L436.1 466.9L439.6 472.3L436.1 482.2L432.5 491.6L427.9 501.0L423.2 509.2L416.1 519.7L409.1 531.5L400.9 543.2L390.3 554.9L378.6 566.7L366.9 575.6L366.9 576.0L362.2 578.3L352.8 585.4L341.0 592.4L327.0 598.3L314.1 603.0L308.2 611.2L308.2 622.9M395.0 99.4L404.4 99.9L416.1 102.2L425.5 105.7L433.7 110.4L436.1 118.6L437.2 128.0L436.1 137.4L432.5 146.8L427.9 157.3L418.5 162.0L404.4 165.5L390.3 166.7L380.9 162.0L373.9 156.2L368.0 146.8L365.7 137.4L366.9 128.0L371.5 118.6L378.6 110.4L385.6 104.5L395.0 99.4M588.1 6.0L586.9 15.4L589.3 24.8L592.8 34.2L598.7 41.2L603.4 47.1L604.5 56.4L602.2 67.0L599.8 76.4L601.0 85.8L604.5 95.2L602.2 99.9L596.3 104.5L590.4 110.4L592.8 116.3L596.3 122.1L599.8 128.0L606.9 136.2L610.4 142.1L613.9 148.0L620.9 148.0M594.0 159.7L586.9 170.2L579.9 179.6L572.8 187.8L565.8 195.6L564.6 196.0L556.4 204.2L549.4 212.4L540.0 224.2L540.0 225.3L521.7 231.2L510.0 235.9L504.1 240.6L498.2 252.3L492.4 264.0L485.3 278.1L477.1 294.5L467.7 311.0L458.4 323.9M514.7 234.7L521.7 238.2L528.7 245.3L535.8 248.8L540.0 252.3L540.0 273.4L542.3 280.5L543.5 289.9L549.4 296.9L554.1 303.9L558.8 311.0L565.8 315.7L570.5 322.7L577.5 327.4L583.4 334.4M570.5 322.7L572.8 313.3L577.5 303.9L581.1 296.9L584.6 293.4M658.5 143.3L666.7 151.5L672.6 156.2L673.7 165.5L683.1 172.6L686.6 182.0L692.5 187.8L704.2 190.2L716.0 188.5L727.7 186.7L744.1 183.1L758.2 180.8L769.9 177.3L784.0 173.8L798.1 172.6L807.0 173.8M714.8 188.5L719.5 195.6L719.5 196.0L727.7 205.4L734.7 213.6L744.1 215.9L751.2 223.0L758.2 234.7L761.7 247.6L765.2 264.0L769.9 278.1L777.0 285.2L784.0 292.2L788.7 299.2L798.1 306.3L807.0 309.8M739.4 252.3L739.4 258.2L746.5 266.4L755.9 273.4L765.2 278.1L771.1 281.6M584.6 333.3L590.4 335.6L594.0 341.5L594.4 350.9L591.6 357.9L585.8 360.2L578.7 358.4L575.2 352.0L574.7 343.8L577.5 336.8L584.6 333.3M583.4 334.4L584.6 346.2L583.4 357.9M592.8 336.8L601.0 329.7L610.4 322.7L622.1 318.0L633.9 313.3L645.6 306.3L657.3 299.2L669.0 292.2L680.8 285.2L692.5 280.5L704.2 275.8L716.0 268.7L727.7 257.0L739.4 251.1L751.2 244.1L762.9 237.1L774.6 232.4L786.4 227.7L798.1 225.3L807.0 222.3M490.0 361.2L493.6 360.2L507.6 357.9L521.7 355.5L540.0 352.7L540.0 352.7L551.7 349.7L563.5 347.3L575.2 348.5L584.6 347.3L594.0 350.9L605.7 355.5L617.4 360.2L633.9 363.8L650.3 367.3L666.7 368.5L685.5 369.6L704.2 371.5L723.0 372.4L739.4 373.1L751.2 370.8L759.4 368.5L769.9 362.6L781.7 355.5L793.4 348.5L802.8 341.5L807.0 336.8M578.7 357.9L572.8 362.6L565.8 369.6L558.8 379.0L554.1 385.6L554.1 386.0L549.4 397.7L544.7 407.1L540.0 410.6L540.0 410.6L533.4 416.5L528.7 423.5L521.7 430.6L517.0 437.6L512.3 447.0L505.3 452.9L495.9 458.7L484.2 464.6L472.4 468.1L460.7 472.3L449.0 473.3L439.6 472.3M586.9 360.2L594.0 369.6L599.8 379.0L603.4 385.6L603.4 386.0L606.9 395.4L612.7 407.1L620.9 415.3L628.0 421.2L632.7 427.1L633.9 435.3L631.5 442.3L630.3 456.4L629.6 470.5L630.3 484.5L629.9 498.6L631.5 512.7L635.0 524.4L640.9 536.2L646.8 547.9L649.1 559.6L651.5 575.6L652.6 576.0L656.1 587.7L659.7 599.5L664.4 611.2L671.4 622.9L678.4 632.3L686.6 639.4L694.9 646.4L701.9 654.6L708.9 662.8L713.6 674.5L718.3 686.3L721.8 698.0L727.7 709.7L734.7 719.1L740.6 728.5L745.3 740.2L747.6 752.0L747.6 765.6L748.4 787.2M628.0 421.2L633.9 423.5L638.5 429.4L636.2 432.9L633.9 435.3M637.4 429.4L645.6 436.4L647.9 442.3L657.3 448.2L669.0 454.0L680.8 458.7L692.5 462.3L708.9 465.8L727.7 468.1L744.1 471.6L760.6 472.8L774.6 478.7L786.4 483.4L798.1 486.4L807.0 489.2M6.0 257.5L20.1 256.5L36.5 255.8L52.9 253.5L67.0 248.8L83.4 244.1L99.9 238.2L111.6 233.5L123.3 228.8L137.4 225.3L149.1 224.2L159.7 225.3M160.9 221.8L170.2 221.3L174.9 224.2L174.9 230.0L170.2 231.7L162.0 231.2L160.4 226.5L160.9 221.8M165.5 231.2L166.7 242.9L167.9 257.0L170.2 273.4L172.6 285.2L172.1 299.2L172.6 313.3L176.1 327.4L177.3 341.5L179.6 355.5L182.0 369.6L183.1 385.6L182.0 386.0L179.6 395.4L173.8 407.1L167.9 418.8L162.0 430.6L160.9 442.3L158.5 454.0L155.0 465.8L152.6 475.2L151.5 479.9L146.8 489.2L140.9 501.0L136.2 512.7L132.7 526.8L130.4 540.9L129.9 559.6L129.9 575.6L129.9 576.0L126.8 590.1L126.1 606.5L126.8 622.9L129.2 637.0L132.7 646.4L134.6 655.8L132.7 665.2L132.2 674.5M6.0 460.6L20.1 462.3L36.5 464.6L52.9 466.2L69.4 469.3L83.4 474.0L97.5 476.3L109.2 474.0L121.0 474.0L132.7 473.5L142.1 476.3L146.8 479.9L152.6 481.0L170.2 479.9L184.3 478.7L198.4 476.3L217.2 475.6L240.6 474.7L254.7 474.0L264.1 473.3L273.0 470.5L273.0 469.3L282.4 465.8L289.4 458.7L298.8 447.0L308.2 435.3L319.9 423.5L331.7 414.2L330.0 417.9M146.8 479.9L148.0 472.8L153.8 468.1M257.1 474.7L252.4 484.5L247.7 496.3L243.0 508.0L237.1 517.4L235.9 526.8L228.9 533.8L221.9 543.2L216.0 550.2L214.8 562.0L214.4 575.6L214.4 576.0L212.5 585.4L207.8 597.1L203.1 608.8L198.4 620.6L193.7 630.0L189.0 639.4L185.5 648.7L184.3 655.8M6.0 660.5L20.1 656.9L36.5 652.3L52.9 646.4L67.0 642.9L81.1 645.2L88.1 651.1L92.8 659.3L99.9 666.3L109.2 669.9L123.3 672.2L132.7 674.5L146.8 681.6L158.5 685.1L170.2 674.5L177.3 667.5L184.3 658.1L184.3 655.8L193.7 655.8L205.4 652.3L217.2 649.9L228.9 646.4L240.6 644.0L254.7 643.6L264.1 644.5L273.0 644.0L273.0 644.0L282.4 641.7L291.8 637.5L301.2 631.1L307.0 626.4L314.1 622.9L322.3 624.1L334.0 625.3L343.4 628.8L355.1 632.3L364.5 637.5L373.9 638.9L383.3 635.8L390.3 630.0L399.7 624.1L413.8 619.4L427.9 618.7L444.3 616.4L456.0 620.6L467.7 619.4L479.5 614.7L493.6 615.9L507.6 617.1L517.0 615.9L528.7 620.6L540.0 626.4L540.0 626.4L551.7 628.8L563.5 633.5L579.9 639.4L594.0 638.9L610.4 640.5L626.8 642.9L643.2 645.2L657.3 647.6L671.4 651.1L685.5 652.3L699.5 656.9L711.3 661.6L727.7 660.5L739.4 662.3L755.9 659.3L769.9 656.9L779.3 655.8L786.4 654.6M88.1 651.1L99.9 642.9L113.9 640.5L128.0 639.8L146.8 640.5L160.9 645.2L170.2 651.1L179.6 655.8L184.3 655.8M6.0 617.1L11.9 622.9L14.2 632.3L11.9 644.0L14.2 655.8L15.4 660.5M158.5 685.1L159.7 687.5M793.4 576.0L786.4 585.4L784.0 599.5L785.2 613.5L786.4 627.6L787.5 641.7L786.4 653.4L788.7 665.2L795.7 672.2L801.6 681.6L805.1 693.3L807.0 702.7M778.2 648.7L779.3 644.0L784.0 641.7L788.7 644.0L791.1 653.4L792.2 662.8L788.7 666.3L781.7 665.2L778.2 658.1L778.2 648.7M807.0 536.2L802.8 545.5L801.6 559.6L798.1 575.6L798.1 576.0L793.4 576.0M400.3 368.0L396.1 370.8L391.9 375.0L389.1 380.6L386.2 386.2L387.6 386.2L397.5 385.5L405.9 380.6M414.4 367.3L421.4 365.9L431.2 363.7L442.5 363.0L452.3 363.7L463.6 364.4L474.8 363.0L484.7 361.6L490.0 361.2M458.4 323.9L455.1 330.0L449.5 334.2L442.5 339.8L435.4 345.5L428.4 348.3L424.2 353.9L418.6 358.1L415.1 363.0L414.4 367.3L411.5 370.8L408.7 376.4L405.9 380.6M405.9 380.6L400.3 383.4L394.7 386.2L387.6 386.2L383.4 390.5L377.8 395.4L372.2 398.2L366.6 399.6L358.1 401.0L351.1 400.3L344.1 402.4L338.4 407.3L334.2 413.0L330.0 417.9" stroke="#8a7200"/>
<path d="M6.0 105.5L154.3 105.5L156.2 109.2L159.7 112.8L161.3 116.3L160.9 121.0L158.5 124.5L155.0 129.2L149.1 133.9L144.4 140.9L138.6 148.7L186.7 149.1M202.6 6.0L201.7 10.7L204.4 12.4L204.2 15.9L206.9 17.5L205.7 20.5L207.9 22.9L206.8 25.7L208.2 28.2L205.0 28.7L203.2 30.9L201.5 35.2L204.3 36.6L203.9 40.1L206.9 41.0L206.2 44.5L208.5 47.0L208.2 49.9L211.7 51.1L210.4 54.6L212.8 56.3L214.9 58.8L218.4 58.6L220.5 60.8L225.3 58.5L228.8 60.2L231.9 63.4L230.6 66.6L232.7 69.3L230.1 71.1L230.5 74.2L227.4 76.1L227.0 80.1L230.0 81.4L228.1 84.8L226.3 88.0L228.2 91.5L225.7 96.2L223.2 98.9L221.0 96.8L218.2 96.6L216.9 93.3L213.5 93.1L211.0 96.1L210.4 101.1L208.1 103.0L208.5 105.8L205.2 107.8L203.9 104.7L205.3 99.9L201.7 98.4L198.2 99.5L199.3 103.3L201.8 105.0L203.6 109.1L199.3 112.5L201.0 116.2L197.0 118.3L195.3 122.4L196.6 124.7L199.7 124.2L198.0 126.7L194.7 127.1L191.4 125.2L189.3 128.3L191.1 131.7L194.1 132.5L195.8 134.9L196.3 137.8L193.5 139.7L193.1 142.9L189.9 144.2L189.1 147.2L186.4 149.0L188.2 153.7L191.1 156.5L190.4 158.6L187.3 158.6L185.6 161.0L187.5 164.6L184.5 168.1L179.5 168.6L177.6 171.8L174.3 170.3L171.4 171.9L170.0 174.8L173.9 178.3L174.6 181.0L170.3 182.2L171.2 185.6L168.1 189.2L163.1 189.8L165.7 193.6L161.9 195.4L162.5 196.0L160.0 199.2L160.1 203.2L156.7 202.9L155.1 205.7L153.5 210.0L156.8 210.9L158.3 213.9L160.3 216.3L159.3 219.5L158.9 222.6L155.8 223.9L152.9 227.9L151.2 232.3L149.7 234.7L146.7 234.5L143.5 238.4L146.4 242.1L147.9 244.7L146.4 247.6L144.8 249.9L141.9 250.9L139.4 252.9L136.2 252.1L132.4 249.1L129.9 250.4L129.3 253.6L130.0 258.3L128.7 260.8L125.4 261.4L127.1 266.3L123.0 269.6L125.7 272.3L125.5 275.8L125.1 279.0L123.0 281.5L124.5 284.6L121.7 287.0L122.5 289.9L118.8 289.9L116.4 292.5L114.8 296.8L110.3 296.0L108.3 297.6L108.4 300.6L105.2 301.4L103.6 304.2L100.4 303.9L98.8 306.5L100.2 309.5L103.7 310.7L99.7 313.1L97.9 315.3L95.0 315.3L98.1 317.4L99.7 320.5L99.0 325.1L95.3 325.0L92.9 327.6L89.4 328.3L87.1 331.2L88.4 333.8L91.8 334.2L88.3 335.7L87.1 339.3L87.2 342.4L89.6 344.9L85.8 344.8L83.5 347.6L81.5 349.3L81.3 352.1L83.4 354.8L87.1 355.3L84.0 355.5L82.4 358.3L78.9 356.5L75.2 357.0L74.4 359.9L76.8 362.5L81.0 364.2L78.6 366.4L75.1 367.1L76.7 370.0L76.0 373.2L79.1 373.5L81.0 375.8L83.9 375.7L85.6 378.1L84.9 381.3L81.9 383.5L81.3 385.7L80.9 386.0L84.4 386.5L85.5 389.9L88.4 391.2L87.8 394.4L84.9 396.9L83.7 399.8L86.0 402.4L82.8 402.4L81.3 405.2L78.2 404.8L76.5 407.4L76.7 409.9L79.0 411.7L82.1 415.5L79.7 417.7L76.2 418.5L76.7 423.5L81.0 425.1L83.0 422.4L86.0 421.6L87.1 424.1L85.3 427.1L84.8 429.8L80.9 429.0L80.1 432.0L79.9 435.4L81.5 438.7L83.7 440.7L87.1 440.9L84.6 442.9L84.9 446.0L80.9 449.1L84.4 449.9L85.6 453.2L88.2 450.3L91.8 449.6L93.1 452.9L91.3 456.4L89.0 458.3L85.7 457.3L85.3 460.3L83.1 462.1L86.6 462.9L88.0 466.0L91.3 465.0L93.9 467.4L96.5 469.4L95.9 473.0L99.8 471.5L98.3 476.2L97.0 478.8L93.9 478.5L93.6 481.4L91.4 483.3L88.3 486.0L88.4 488.5L90.8 490.3L86.7 493.6L84.9 495.7L82.2 496.1L84.6 498.2L85.6 501.1L85.2 503.6L83.0 505.5L81.7 508.1L78.6 507.8L78.0 510.7L74.9 511.3L74.3 514.1L70.6 514.8L68.4 517.7L65.9 519.2L66.1 522.2L67.8 524.0L70.7 524.2L71.5 528.0L68.5 528.5L65.9 526.4L65.6 530.1L63.3 532.6L63.7 535.7L62.0 538.5L59.1 539.1L56.5 536.9L54.4 541.0L56.5 543.3L60.1 542.9L56.9 544.8L55.5 548.1L52.6 549.6L52.1 552.8L49.1 555.0L48.6 558.7L50.3 562.2L52.5 560.0L55.4 559.9L56.0 562.8L53.9 565.5L53.9 568.3L51.5 570.0L49.1 572.2L45.8 570.9L45.0 575.7L44.3 576.0L47.2 578.4L46.8 582.0L49.2 584.4L49.2 587.8L49.5 590.7L46.7 592.3L45.0 594.7L186.7 594.3L184.5 596.4L186.3 599.7L183.9 601.7L184.5 604.6L181.9 606.2L182.8 609.3L180.6 611.1L180.8 614.5L177.9 617.1L178.7 620.6L178.1 623.8L180.0 626.7L179.2 630.0L181.5 632.4L181.4 635.7L183.5 638.0L185.0 640.5L188.1 641.3L187.9 644.6L191.5 645.7L190.9 648.9L193.3 651.6L191.6 655.3L193.9 658.1L193.2 661.2L196.4 663.3L195.7 666.4M304.7 6.0L308.2 9.5L309.4 15.4L303.5 18.9L294.1 20.1L284.7 22.4L278.9 24.8L276.5 29.5L277.7 36.5L282.4 41.2L283.6 47.1L281.2 51.8L276.5 54.1L273.0 54.1L273.0 54.1L266.4 49.4L259.4 45.4L254.7 42.4L247.7 40.0L241.8 39.6L237.1 41.2L232.4 44.7L228.9 48.2L226.6 52.9L225.4 58.8M208.3 104.5L273.0 105.0L273.0 105.2L311.7 105.2L312.9 99.9L310.5 96.3L310.5 88.6L324.6 91.6L343.4 92.1L366.9 91.6L402.0 90.5L419.6 90.0L421.3 92.3L437.2 91.6L460.7 92.8L484.2 94.0L507.6 94.0L540.0 94.0L540.0 94.7L572.8 95.6L603.4 96.3L635.0 96.8L657.3 95.9L704.2 96.3L741.8 96.3L766.4 95.2L786.4 94.7L807.0 97.0M635.0 96.8L640.9 92.8L650.3 89.3L657.3 88.1L666.7 84.6L676.1 83.0L678.4 77.6L683.1 74.0L690.2 72.9L696.0 69.4L697.2 63.5L701.9 59.5L707.8 56.4L707.8 49.4L713.6 45.9L723.0 41.2L732.4 36.5L739.4 34.2L746.5 28.3L753.5 22.4L759.4 16.6L762.9 14.2M747.6 6.0L748.8 7.2L752.3 10.7L758.2 11.9L762.9 14.2L766.4 13.0L765.2 16.6L761.7 17.7L762.9 22.4L766.4 24.8L768.8 29.5L772.3 33.0L777.0 35.3L781.7 40.0L786.4 42.4L793.4 41.2L800.4 38.8L805.1 35.3L807.0 33.0M786.4 94.7L784.0 98.7L785.2 103.4L781.7 109.2L782.8 116.3L781.7 119.8L778.2 118.6L772.3 121.0L767.6 124.5L764.1 130.4L760.6 136.2L755.9 139.7L750.0 138.6L744.1 136.2L739.4 137.4L732.4 139.7L727.7 144.4L723.0 150.3L718.3 152.6L716.0 149.1L714.8 144.4L711.3 143.3L707.8 146.8L704.2 149.1L701.9 153.8L697.2 155.0L693.7 156.2L692.5 160.9L690.2 165.5L687.8 169.1L680.8 167.9L677.3 170.2L671.4 173.8L666.7 177.3L659.7 180.8L652.6 185.5L647.9 187.8L640.9 186.7L633.9 187.8L626.8 189.0L620.9 192.5L618.6 195.6L618.6 196.0L612.7 198.3L610.4 203.0L609.2 210.1L605.7 214.8L598.7 215.9L594.0 214.3L590.4 218.3L589.3 228.8L588.1 239.4M143.3 238.7L273.0 238.7L273.0 238.7L300.0 237.8L397.4 238.2L471.3 238.9L540.0 239.6L540.0 239.4L659.7 239.4L678.4 238.7L685.5 235.9L694.9 233.5L704.2 231.2L711.3 227.7L718.3 225.3L727.7 221.8L732.4 220.6L739.4 220.2L751.2 220.6L774.6 221.8L807.0 223.5M678.4 238.7L676.1 242.9L670.2 247.6L665.5 253.5L662.0 258.2L660.8 264.0L664.4 267.6L670.2 271.1L674.9 274.6L680.8 279.3L686.6 284.0L693.7 284.0L697.2 288.7L700.7 294.5L704.2 301.6L706.6 309.8L711.3 316.8L716.0 323.9L719.5 329.7L725.4 334.4L731.2 338.0L737.1 342.6L741.8 348.5L745.3 354.4L747.6 361.4L753.5 363.8L759.4 367.3L761.7 372.0L766.4 375.5L767.6 381.4L766.4 385.6L766.4 386.0L772.3 389.5L774.6 395.4L779.3 398.9L780.5 403.6L786.4 407.1L793.4 410.6L798.1 415.3L799.3 423.5L802.8 428.2L804.0 435.3L807.0 438.8L807.0 456.4M300.0 237.8L303.5 244.1L307.7 247.6L307.0 257.0L303.5 289.9L300.0 322.7L296.5 355.5L292.9 385.6L292.9 386.0L289.4 421.2L284.7 456.4L281.2 491.6L279.6 517.4L281.2 550.2L282.4 575.6L282.4 576.0L283.6 611.2L285.2 646.4L285.2 652.3M493.1 239.4L499.4 273.4L505.3 313.3L511.2 348.5L515.8 374.3L518.2 385.6L518.2 386.0L521.7 404.8L525.2 425.9L527.6 435.3L531.1 444.7L534.6 454.0L538.1 463.4L540.0 469.3L540.0 466.9L542.3 476.3L545.2 481.0L541.2 485.7L540.0 488.1L540.0 486.9L537.0 491.6L533.4 498.6L532.3 508.0L531.1 517.4L533.4 531.5L533.9 545.5L532.3 559.6L531.1 575.6L529.9 576.0L533.4 583.0L537.0 590.1L538.1 594.3L540.0 599.5L540.0 599.5L542.3 606.5L544.7 613.5L547.0 619.4L744.1 632.3L745.3 639.4L746.5 646.4L748.8 650.6L755.9 651.1L759.4 646.4L760.6 637.0L759.4 627.6L757.7 618.2L759.4 612.4L765.2 610.0L771.1 611.7L777.0 614.7L785.2 617.1L788.7 618.2M537.7 594.3L344.6 594.3L344.6 599.5L341.0 606.5L344.6 611.2L350.4 615.9L356.3 621.8L359.8 626.4L358.6 632.3L355.1 637.0L357.5 642.9L361.0 644.0M6.0 415.3L78.7 415.3" stroke="#000"/>
<g stroke="#d6d6d6" stroke-width="1"><path d="M416.4 247.9A159.5 159.5 0 1 1 394.8 248.1"/><path d="M416.4 127.9A279.4 279.4 0 1 1 394.8 128.0"/><path d="M416.4 7.8A399.4 399.4 0 1 1 394.8 7.9"/><circle cx="407.0" cy="407.1" r="519.3"/></g>
<text x="405.6" y="11.0" text-anchor="middle" textLength="20.4" lengthAdjust="spacingAndGlyphs" font-family="DejaVu Sans,Liberation Sans,sans-serif" font-size="10" fill="#ffff99" stroke="none" shape-rendering="auto">313</text>
<text x="405.6" y="131.0" text-anchor="middle" textLength="20.4" lengthAdjust="spacingAndGlyphs" font-family="DejaVu Sans,Liberation Sans,sans-serif" font-size="10" fill="#ffff99" stroke="none" shape-rendering="auto">219</text>
<text x="405.6" y="251.0" text-anchor="middle" textLength="20.4" lengthAdjust="spacingAndGlyphs" font-family="DejaVu Sans,Liberation Sans,sans-serif" font-size="10" fill="#ffff99" stroke="none" shape-rendering="auto">125</text>
<text x="405.6" y="371.0" text-anchor="middle" textLength="13.6" lengthAdjust="spacingAndGlyphs" font-family="DejaVu Sans,Liberation Sans,sans-serif" font-size="10" fill="#ffff99" stroke="none" shape-rendering="auto">31</text>
<g stroke="#f80808" stroke-width="1"><circle cx="407.0" cy="407.1" r="39.5"/></g>
</svg>
</div>
<div id="legend" class="abs" style="left:9px;top:759px;width:241px;height:42px;border:1px solid #b0b0b0;background:#000;box-shadow:0 0 0 1px #4a4a4a;"></div>
<div class="abs" style="left:685px;top:792px;width:121px;height:14px;background:#000;"></div>
<svg class="abs" style="left:9px;top:759px;" width="243" height="44" viewBox="9 759 243 44" fill="none" stroke-width="1.3">
<g stroke="#00e8f0"><circle cx="60.5" cy="780.5" r="4"/><path d="M58 780.5H63M82 780.5H89M107.8 780.5H112.8M110.3 778V783M132 780.5H139M135.5 777V784"/><circle cx="110.3" cy="780.5" r="4"/></g>
<g stroke="#f4ec00"><circle cx="60.5" cy="793.5" r="4"/><path d="M58 793.5H63M82 793.5H89M107.8 793.5H112.8M110.3 791V796M132 793.5H139M135.5 790V797"/><circle cx="110.3" cy="793.5" r="4"/></g>
</svg>
<div class="panel" style="top:8px;height:318px;"></div>
<div class="panel" style="top:333px;height:113px;"></div>
<div class="panel" style="top:453px;height:348px;"></div>
<div class="btn k" style="left:819px;top:16px;width:58px;height:18px;background:#5a0000;"></div>
<div class="btn k" style="left:883px;top:16px;width:58px;height:18px;background:#333;"></div>
<div class="btn k" style="left:994px;top:16px;width:129px;height:18px;background:#2c2c2c;"></div>
<div class="btn" style="left:821px;top:64px;width:82px;height:16px;"></div>
<div class="btn" style="left:931px;top:64px;width:82px;height:16px;"></div>
<div class="btn" style="left:1041px;top:64px;width:82px;height:16px;"></div>
<div class="abs" style="left:821px;top:217px;width:303px;height:1px;background:#8c8c8c;"></div>
<div class="bar" style="left:925px;top:227px;"><i style="width:15px;background:#f00;"></i></div>
<div class="bar" style="left:1028px;top:227px;"><i style="width:17px;background:#9cf;"></i></div>
<div class="bar" style="left:925px;top:281px;"><i style="width:11px;background:#e860a8;"></i></div>
<div class="bar" style="left:1028px;top:281px;"><i style="width:6px;background:#0e0;"></i></div>
<div class="abs" style="left:821px;top:358px;width:302px;height:1px;background:#8c8c8c;"></div>
<svg class="abs" style="left:812px;top:530px;" width="320" height="272" viewBox="812 530 320 272" shape-rendering="crispEdges">
<g stroke="#c4c4c4" stroke-width="1" fill="none">
<path d="M1088.5 542V778M822 777.5H1089"/>
<path d="M1084 542.5H1090M1084 620.5H1090M1084 699.5H1090M1086 581.5H1090M1086 659.5H1090M1086 738.5H1090"/>
<path d="M822.5 775V779M866.5 775V779M911.5 775V779M955.5 775V779M999.5 775V779M1044.5 775V779"/>
</g>
<path d="M984.5 777L986.5 769.5H989L990.5 777" stroke="#fff" fill="none" shape-rendering="auto"/>
</svg>
<span id="strike" class="t b c1" style="left:823.86px;top:19.35px;font-size:12px;line-height:15px;transform:scaleX(1.0097);">STRIKE</span>
<span id="noise" class="t b c2" style="left:889.29px;top:19.35px;font-size:12px;line-height:15px;transform:scaleX(1.0591);">NOISE</span>
<span id="bng" class="t b" style="left:998.73px;top:19.35px;font-size:12px;line-height:15px;transform:scaleX(1.0234);">Bng 159°</span>
<span id="mi" class="t b gr" style="left:1074.67px;top:19.35px;font-size:12px;line-height:15px;transform:scaleX(1.0668);">336mi</span>
<span id="smin" class="t " style="left:829.64px;top:66.19px;font-size:11px;line-height:14px;transform:scaleX(1.0556);">Strikes/min</span>
<span id="cmin" class="t " style="left:943.72px;top:66.19px;font-size:11px;line-height:14px;transform:scaleX(1.0542);">Close/min</span>
<span id="nmin" class="t " style="left:1050.09px;top:66.19px;font-size:11px;line-height:14px;transform:scaleX(1.0504);">Noises/min</span>
<span id="z1" class="t b" style="left:884.06px;top:85.28px;font-size:27.5px;line-height:34px;transform:scaleX(1.0000);">0</span>
<span id="z2" class="t b" style="left:994.24px;top:85.28px;font-size:27.5px;line-height:34px;transform:scaleX(1.0000);">0</span>
<span id="z3" class="t b g" style="left:1103.88px;top:85.28px;font-size:27.5px;line-height:34px;transform:scaleX(1.0000);">0</span>
<span id="ts" class="t " style="left:826.11px;top:132.35px;font-size:12px;line-height:15px;transform:scaleX(1.0493);">Total Strikes</span>
<span id="tc" class="t " style="left:945.81px;top:132.35px;font-size:12px;line-height:15px;transform:scaleX(1.0426);">Total Close</span>
<span id="tn" class="t g" style="left:1047.10px;top:132.35px;font-size:12px;line-height:15px;transform:scaleX(1.0481);">Total Noises</span>
<span id="v26" class="t " style="left:887.36px;top:150.35px;font-size:12px;line-height:15px;transform:scaleX(0.9794);">26</span>
<span id="v0" class="t " style="left:1005.21px;top:150.35px;font-size:12px;line-height:15px;transform:scaleX(1.0000);">0</span>
<span id="v93" class="t g" style="left:1107.10px;top:150.35px;font-size:12px;line-height:15px;transform:scaleX(1.0204);">93</span>
<span id="ltd" class="t g" style="left:820.03px;top:204.35px;font-size:12px;line-height:15px;transform:scaleX(1.0410);">Lightning type distribution</span>
<span id="cg" class="t b" style="left:821.08px;top:226.35px;font-size:12px;line-height:15px;transform:scaleX(0.9244);">Cloud-ground</span>
<span id="p1" class="t " style="left:912.71px;top:226.35px;font-size:12px;line-height:15px;transform:scaleX(1.0000);">+</span>
<span id="pc31" class="t b" style="left:979.49px;top:226.35px;font-size:12px;line-height:15px;transform:scaleX(0.9875);">31%</span>
<span id="m1" class="t b" style="left:1015.24px;top:226.35px;font-size:12px;line-height:15px;transform:scaleX(1.0000);">−</span>
<span id="pc35" class="t b" style="left:1082.80px;top:226.35px;font-size:12px;line-height:15px;transform:scaleX(0.9975);">35%</span>
<span id="cnt1" class="t g" style="left:821.68px;top:250.35px;font-size:12px;line-height:15px;transform:scaleX(1.0406);">Count</span>
<span id="n8" class="t b" style="left:925.41px;top:250.35px;font-size:12px;line-height:15px;transform:scaleX(1.0000);">8</span>
<span id="n9" class="t b" style="left:1029.26px;top:250.35px;font-size:12px;line-height:15px;transform:scaleX(1.0000);">9</span>
<span id="ic" class="t b" style="left:821.13px;top:280.35px;font-size:12px;line-height:15px;transform:scaleX(0.9344);">Intracloud</span>
<span id="p2" class="t " style="left:912.71px;top:280.35px;font-size:12px;line-height:15px;transform:scaleX(1.0000);">+</span>
<span id="pc23" class="t b" style="left:979.39px;top:280.35px;font-size:12px;line-height:15px;transform:scaleX(1.0181);">23%</span>
<span id="m2" class="t b" style="left:1015.24px;top:280.35px;font-size:12px;line-height:15px;transform:scaleX(1.0000);">−</span>
<span id="pc12" class="t b" style="left:1081.60px;top:280.35px;font-size:12px;line-height:15px;transform:scaleX(1.0284);">12%</span>
<span id="cnt2" class="t g" style="left:821.68px;top:304.35px;font-size:12px;line-height:15px;transform:scaleX(1.0406);">Count</span>
<span id="n6" class="t b" style="left:925.41px;top:304.35px;font-size:12px;line-height:15px;transform:scaleX(1.0000);">6</span>
<span id="n3" class="t b" style="left:1028.76px;top:304.35px;font-size:12px;line-height:15px;transform:scaleX(1.0000);">3</span>
<span id="date" class="t b gr" style="left:820.67px;top:337.66px;font-size:16px;line-height:20px;transform:scaleX(1.0355);">2/23/2026 7:25:02 PM</span>
<span id="r1" class="t " style="left:821.57px;top:377.35px;font-size:12px;line-height:15px;transform:scaleX(1.0224);">Squelch</span>
<span id="r2" class="t " style="left:909.32px;top:377.35px;font-size:12px;line-height:15px;transform:scaleX(1.0000);">0</span>
<span id="r3" class="t " style="left:981.81px;top:377.35px;font-size:12px;line-height:15px;transform:scaleX(1.0672);">Upload</span>
<span id="r4" class="t g" style="left:1060.12px;top:377.35px;font-size:12px;line-height:15px;transform:scaleX(1.0507);">Disabled</span>
<span id="r5" class="t " style="left:820.72px;top:397.35px;font-size:12px;line-height:15px;transform:scaleX(1.0690);">Persistence</span>
<span id="r6" class="t " style="left:909.82px;top:397.35px;font-size:12px;line-height:15px;transform:scaleX(0.9962);">90 min</span>
<span id="r7" class="t " style="left:981.26px;top:397.35px;font-size:12px;line-height:15px;transform:scaleX(1.0559);">Capture</span>
<span id="r8" class="t gr" style="left:1061.22px;top:397.35px;font-size:12px;line-height:15px;transform:scaleX(0.9726);">Active</span>
<span id="r9" class="t " style="left:820.52px;top:417.35px;font-size:12px;line-height:15px;transform:scaleX(1.0604);">Range</span>
<span id="r10" class="t " style="left:909.52px;top:417.35px;font-size:12px;line-height:15px;transform:scaleX(1.0181);">313 mi</span>
<span id="r11" class="t " style="left:980.21px;top:417.35px;font-size:12px;line-height:15px;transform:scaleX(1.0220);">Receiver</span>
<span id="r12" class="t gr" style="left:1060.47px;top:417.35px;font-size:12px;line-height:15px;transform:scaleX(1.0712);">Enabled</span>
<span id="r13" class="t g" style="left:821.12px;top:464.35px;font-size:12px;line-height:15px;transform:scaleX(0.9814);">Uptime</span>
<span id="r14" class="t " style="left:908.87px;top:464.35px;font-size:12px;line-height:15px;transform:scaleX(1.0637);">1015:10</span>
<span id="r15" class="t g" style="left:980.56px;top:464.35px;font-size:12px;line-height:15px;transform:scaleX(1.0478);">Peak time</span>
<span id="r16" class="t g" style="left:1060.57px;top:464.35px;font-size:12px;line-height:15px;transform:scaleX(1.0490);">Plot</span>
<span id="r17" class="t g" style="left:820.42px;top:487.35px;font-size:12px;line-height:15px;transform:scaleX(1.0803);">Peak rate</span>
<span id="r18" class="t " style="left:909.47px;top:487.35px;font-size:12px;line-height:15px;transform:scaleX(0.9923);">2/min</span>
<span id="r19" class="t " style="left:981.76px;top:487.35px;font-size:12px;line-height:15px;transform:scaleX(1.0170);">4:12 AM</span>
<span id="r20" class="t " style="left:1061.42px;top:487.35px;font-size:12px;line-height:15px;transform:scaleX(1.0272);">Strike</span>
<span id="r21" class="t g" style="left:822.74px;top:517.35px;font-size:12px;line-height:15px;transform:scaleX(1.0519);">Trend graph</span>
<span id="r22" class="t " style="left:908.44px;top:517.35px;font-size:12px;line-height:15px;transform:scaleX(0.9962);">60 min</span>
<span id="y30" class="t g" style="left:1092.48px;top:536.19px;font-size:11px;line-height:14px;transform:scaleX(1.0311);">30</span>
<span id="y20" class="t g" style="left:1092.58px;top:614.19px;font-size:11px;line-height:14px;transform:scaleX(0.9691);">20</span>
<span id="y10" class="t g" style="left:1091.08px;top:693.19px;font-size:11px;line-height:14px;transform:scaleX(1.0192);">10</span>
<span id="x0" class="t g" style="left:820.26px;top:782.19px;font-size:11px;line-height:14px;transform:scaleX(0.9470);">60</span>
<span id="x1" class="t g" style="left:864.39px;top:782.19px;font-size:11px;line-height:14px;transform:scaleX(0.9515);">50</span>
<span id="x2" class="t g" style="left:909.43px;top:782.19px;font-size:11px;line-height:14px;transform:scaleX(0.9499);">40</span>
<span id="x3" class="t g" style="left:953.31px;top:782.19px;font-size:11px;line-height:14px;transform:scaleX(1.0171);">30</span>
<span id="x4" class="t g" style="left:997.26px;top:782.19px;font-size:11px;line-height:14px;transform:scaleX(0.9470);">20</span>
<span id="x5" class="t g" style="left:1041.92px;top:782.19px;font-size:11px;line-height:14px;transform:scaleX(0.9509);">10</span>
<span id="x6" class="t g" style="left:1087.46px;top:782.19px;font-size:11px;line-height:14px;transform:scaleX(1.0000);">0</span>
<span id="x7" class="t g" style="left:1100.83px;top:782.19px;font-size:11px;line-height:14px;transform:scaleX(0.8567);">min</span>
<span id="lg1" class="t lg" style="left:13.35px;top:761.82px;font-size:9.2px;line-height:12px;transform:scaleX(1.0301);">Symbols</span>
<span id="lg2" class="t lg" style="left:52.95px;top:761.82px;font-size:9.2px;line-height:12px;transform:scaleX(0.9893);">-CG</span>
<span id="lg3" class="t lg" style="left:78.46px;top:761.82px;font-size:9.2px;line-height:12px;transform:scaleX(1.1427);">-IC</span>
<span id="lg4" class="t lg" style="left:99.34px;top:761.82px;font-size:9.2px;line-height:12px;transform:scaleX(1.0190);">+CG</span>
<span id="lg5" class="t lg" style="left:124.16px;top:761.82px;font-size:9.2px;line-height:12px;transform:scaleX(1.1624);">+IC</span>
<span id="lg6" class="t lg" style="left:153.08px;top:761.82px;font-size:9.2px;line-height:12px;transform:scaleX(0.9894);">Strike age color codes</span>
<span id="lg7" class="t lg" style="left:13.21px;top:774.82px;font-size:9.2px;line-height:12px;transform:scaleX(0.9436);">Recent</span>
<span id="lg8" class="t lg" style="left:13.26px;top:787.82px;font-size:9.2px;line-height:12px;transform:scaleX(1.0187);">Old</span>
<span id="la0" class="t lg" style="left:152.30px;top:774.82px;font-size:9.2px;line-height:12px;color:#f8d800;transform:scaleX(1.0599);">15+</span>
<span id="la1" class="t lg" style="left:188.70px;top:774.82px;font-size:9.2px;line-height:12px;color:#f0a000;transform:scaleX(0.9770);">30+</span>
<span id="la2" class="t lg" style="left:223.34px;top:774.82px;font-size:9.2px;line-height:12px;color:#f08800;transform:scaleX(1.0246);">45+</span>
<span id="la3" class="t lg" style="left:152.60px;top:787.82px;font-size:9.2px;line-height:12px;color:#e87000;transform:scaleX(1.0867);">60+</span>
<span id="la4" class="t lg" style="left:187.60px;top:787.82px;font-size:9.2px;line-height:12px;color:#e85000;transform:scaleX(1.0867);">75+</span>
<span id="la5" class="t lg" style="left:222.34px;top:787.82px;font-size:9.2px;line-height:12px;color:#e82800;transform:scaleX(1.1317);">90+</span>
<span id="cpr" class="t lg" style="left:689.41px;top:793.32px;font-size:9.2px;line-height:12px;transform:scaleX(1.0131);">©2005 Astrogenic Systems</span>
</body></html>
